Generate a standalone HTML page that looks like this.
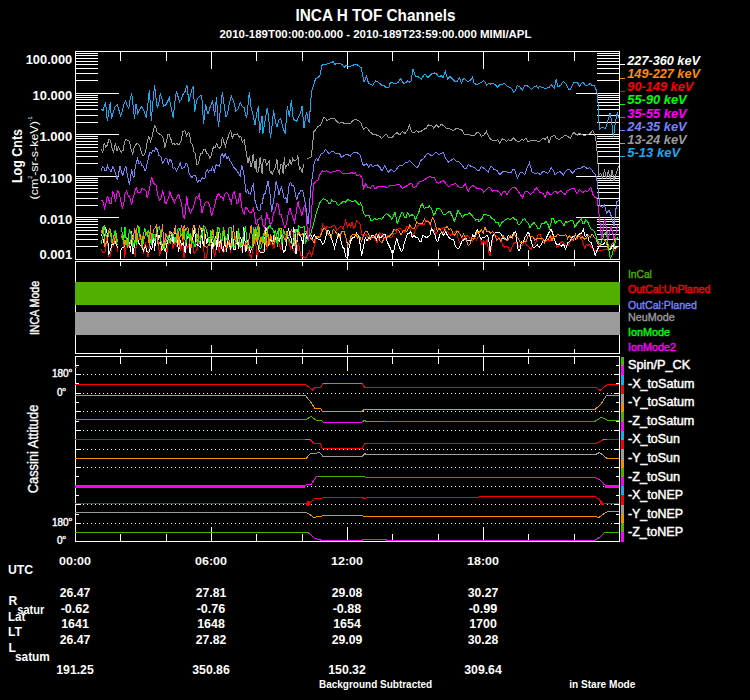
<!DOCTYPE html><html><head><meta charset="utf-8"><style>html,body{margin:0;padding:0;background:#000}svg{display:block}</style></head><body>
<svg width="750" height="700" viewBox="0 0 750 700" font-family="'Liberation Sans', sans-serif" shape-rendering="crispEdges">
<rect width="750" height="700" fill="#000"/>
<text x="375.5" y="21" font-size="16" fill="#fff" font-weight="bold" text-anchor="middle" textLength="160" lengthAdjust="spacingAndGlyphs">INCA H TOF Channels</text>
<text x="375.5" y="37.8" font-size="11.3" fill="#fff" font-weight="bold" text-anchor="middle" textLength="312" lengthAdjust="spacingAndGlyphs">2010-189T00:00:00.000 - 2010-189T23:59:00.000 MIMI/APL</text>
<rect x="75" y="51" width="545" height="1" fill="#fff"/>
<rect x="75" y="259" width="545" height="1" fill="#fff"/>
<rect x="75" y="51" width="1" height="209" fill="#fff"/>
<rect x="619" y="51" width="1" height="209" fill="#fff"/>
<rect x="120" y="52" width="1" height="9" fill="#fff"/>
<rect x="120" y="250" width="1" height="9" fill="#fff"/>
<rect x="166" y="52" width="1" height="9" fill="#fff"/>
<rect x="166" y="250" width="1" height="9" fill="#fff"/>
<rect x="211" y="52" width="1" height="17" fill="#fff"/>
<rect x="211" y="242" width="1" height="17" fill="#fff"/>
<rect x="256" y="52" width="1" height="9" fill="#fff"/>
<rect x="256" y="250" width="1" height="9" fill="#fff"/>
<rect x="302" y="52" width="1" height="9" fill="#fff"/>
<rect x="302" y="250" width="1" height="9" fill="#fff"/>
<rect x="347" y="52" width="1" height="17" fill="#fff"/>
<rect x="347" y="242" width="1" height="17" fill="#fff"/>
<rect x="392" y="52" width="1" height="9" fill="#fff"/>
<rect x="392" y="250" width="1" height="9" fill="#fff"/>
<rect x="438" y="52" width="1" height="9" fill="#fff"/>
<rect x="438" y="250" width="1" height="9" fill="#fff"/>
<rect x="483" y="52" width="1" height="17" fill="#fff"/>
<rect x="483" y="242" width="1" height="17" fill="#fff"/>
<rect x="528" y="52" width="1" height="9" fill="#fff"/>
<rect x="528" y="250" width="1" height="9" fill="#fff"/>
<rect x="574" y="52" width="1" height="9" fill="#fff"/>
<rect x="574" y="250" width="1" height="9" fill="#fff"/>
<rect x="76" y="80" width="22" height="1" fill="#fff"/>
<rect x="597" y="80" width="22" height="1" fill="#fff"/>
<rect x="76" y="73" width="22" height="1" fill="#fff"/>
<rect x="597" y="73" width="22" height="1" fill="#fff"/>
<rect x="76" y="68" width="22" height="1" fill="#fff"/>
<rect x="597" y="68" width="22" height="1" fill="#fff"/>
<rect x="76" y="64" width="22" height="1" fill="#fff"/>
<rect x="597" y="64" width="22" height="1" fill="#fff"/>
<rect x="76" y="61" width="22" height="1" fill="#fff"/>
<rect x="597" y="61" width="22" height="1" fill="#fff"/>
<rect x="76" y="58" width="22" height="1" fill="#fff"/>
<rect x="597" y="58" width="22" height="1" fill="#fff"/>
<rect x="76" y="55" width="22" height="1" fill="#fff"/>
<rect x="597" y="55" width="22" height="1" fill="#fff"/>
<rect x="76" y="53" width="22" height="1" fill="#fff"/>
<rect x="597" y="53" width="22" height="1" fill="#fff"/>
<rect x="76" y="122" width="22" height="1" fill="#fff"/>
<rect x="597" y="122" width="22" height="1" fill="#fff"/>
<rect x="76" y="115" width="22" height="1" fill="#fff"/>
<rect x="597" y="115" width="22" height="1" fill="#fff"/>
<rect x="76" y="109" width="22" height="1" fill="#fff"/>
<rect x="597" y="109" width="22" height="1" fill="#fff"/>
<rect x="76" y="105" width="22" height="1" fill="#fff"/>
<rect x="597" y="105" width="22" height="1" fill="#fff"/>
<rect x="76" y="102" width="22" height="1" fill="#fff"/>
<rect x="597" y="102" width="22" height="1" fill="#fff"/>
<rect x="76" y="99" width="22" height="1" fill="#fff"/>
<rect x="597" y="99" width="22" height="1" fill="#fff"/>
<rect x="76" y="97" width="22" height="1" fill="#fff"/>
<rect x="597" y="97" width="22" height="1" fill="#fff"/>
<rect x="76" y="95" width="22" height="1" fill="#fff"/>
<rect x="597" y="95" width="22" height="1" fill="#fff"/>
<rect x="76" y="163" width="22" height="1" fill="#fff"/>
<rect x="597" y="163" width="22" height="1" fill="#fff"/>
<rect x="76" y="156" width="22" height="1" fill="#fff"/>
<rect x="597" y="156" width="22" height="1" fill="#fff"/>
<rect x="76" y="151" width="22" height="1" fill="#fff"/>
<rect x="597" y="151" width="22" height="1" fill="#fff"/>
<rect x="76" y="147" width="22" height="1" fill="#fff"/>
<rect x="597" y="147" width="22" height="1" fill="#fff"/>
<rect x="76" y="144" width="22" height="1" fill="#fff"/>
<rect x="597" y="144" width="22" height="1" fill="#fff"/>
<rect x="76" y="141" width="22" height="1" fill="#fff"/>
<rect x="597" y="141" width="22" height="1" fill="#fff"/>
<rect x="76" y="138" width="22" height="1" fill="#fff"/>
<rect x="597" y="138" width="22" height="1" fill="#fff"/>
<rect x="76" y="136" width="22" height="1" fill="#fff"/>
<rect x="597" y="136" width="22" height="1" fill="#fff"/>
<rect x="76" y="205" width="22" height="1" fill="#fff"/>
<rect x="597" y="205" width="22" height="1" fill="#fff"/>
<rect x="76" y="198" width="22" height="1" fill="#fff"/>
<rect x="597" y="198" width="22" height="1" fill="#fff"/>
<rect x="76" y="192" width="22" height="1" fill="#fff"/>
<rect x="597" y="192" width="22" height="1" fill="#fff"/>
<rect x="76" y="188" width="22" height="1" fill="#fff"/>
<rect x="597" y="188" width="22" height="1" fill="#fff"/>
<rect x="76" y="185" width="22" height="1" fill="#fff"/>
<rect x="597" y="185" width="22" height="1" fill="#fff"/>
<rect x="76" y="182" width="22" height="1" fill="#fff"/>
<rect x="597" y="182" width="22" height="1" fill="#fff"/>
<rect x="76" y="180" width="22" height="1" fill="#fff"/>
<rect x="597" y="180" width="22" height="1" fill="#fff"/>
<rect x="76" y="178" width="22" height="1" fill="#fff"/>
<rect x="597" y="178" width="22" height="1" fill="#fff"/>
<rect x="76" y="246" width="22" height="1" fill="#fff"/>
<rect x="597" y="246" width="22" height="1" fill="#fff"/>
<rect x="76" y="239" width="22" height="1" fill="#fff"/>
<rect x="597" y="239" width="22" height="1" fill="#fff"/>
<rect x="76" y="234" width="22" height="1" fill="#fff"/>
<rect x="597" y="234" width="22" height="1" fill="#fff"/>
<rect x="76" y="230" width="22" height="1" fill="#fff"/>
<rect x="597" y="230" width="22" height="1" fill="#fff"/>
<rect x="76" y="227" width="22" height="1" fill="#fff"/>
<rect x="597" y="227" width="22" height="1" fill="#fff"/>
<rect x="76" y="224" width="22" height="1" fill="#fff"/>
<rect x="597" y="224" width="22" height="1" fill="#fff"/>
<rect x="76" y="221" width="22" height="1" fill="#fff"/>
<rect x="597" y="221" width="22" height="1" fill="#fff"/>
<rect x="76" y="219" width="22" height="1" fill="#fff"/>
<rect x="597" y="219" width="22" height="1" fill="#fff"/>
<rect x="76" y="51" width="43" height="1" fill="#fff"/>
<rect x="576" y="51" width="43" height="1" fill="#fff"/>
<rect x="76" y="93" width="43" height="1" fill="#fff"/>
<rect x="576" y="93" width="43" height="1" fill="#fff"/>
<rect x="76" y="134" width="43" height="1" fill="#fff"/>
<rect x="576" y="134" width="43" height="1" fill="#fff"/>
<rect x="76" y="176" width="43" height="1" fill="#fff"/>
<rect x="576" y="176" width="43" height="1" fill="#fff"/>
<rect x="76" y="217" width="43" height="1" fill="#fff"/>
<rect x="576" y="217" width="43" height="1" fill="#fff"/>
<rect x="76" y="259" width="43" height="1" fill="#fff"/>
<rect x="576" y="259" width="43" height="1" fill="#fff"/>
<text x="72.2" y="63.5" font-size="12.5" fill="#fff" font-weight="bold" text-anchor="end" textLength="46.5" lengthAdjust="spacingAndGlyphs">100.000</text>
<text x="72.2" y="99.7" font-size="12.5" fill="#fff" font-weight="bold" text-anchor="end" textLength="39.6" lengthAdjust="spacingAndGlyphs">10.000</text>
<text x="72.2" y="141.20000000000002" font-size="12.5" fill="#fff" font-weight="bold" text-anchor="end" textLength="32.8" lengthAdjust="spacingAndGlyphs">1.000</text>
<text x="72.2" y="182.70000000000002" font-size="12.5" fill="#fff" font-weight="bold" text-anchor="end" textLength="32.8" lengthAdjust="spacingAndGlyphs">0.100</text>
<text x="72.2" y="224.20000000000002" font-size="12.5" fill="#fff" font-weight="bold" text-anchor="end" textLength="32.8" lengthAdjust="spacingAndGlyphs">0.010</text>
<text x="72.2" y="259.3" font-size="12.5" fill="#fff" font-weight="bold" text-anchor="end" textLength="32.8" lengthAdjust="spacingAndGlyphs">0.001</text>
<text x="21.6" y="156" font-size="14.5" fill="#fff" font-weight="bold" text-anchor="middle" textLength="54" lengthAdjust="spacingAndGlyphs" transform="rotate(-90 21.6 156)">Log Cnts</text>
<text x="37.8" y="158" font-size="11.8" fill="#fff" text-anchor="middle" textLength="83" lengthAdjust="spacingAndGlyphs" transform="rotate(-90 37.8 158)">(cm<tspan font-size='5' dy='-6'>2</tspan><tspan dy='6'>-sr-s-keV)</tspan><tspan font-size='5' dy='-6'>-1</tspan></text>
<rect x="620" y="64" width="5" height="1" fill="#ffffff"/>
<text x="627.3" y="65.0" font-size="12" fill="#ffffff" font-weight="bold" font-style="italic" textLength="72.6" lengthAdjust="spacingAndGlyphs">227-360 keV</text>
<rect x="620" y="78" width="5" height="1" fill="#ff8c00"/>
<text x="627.3" y="78.13" font-size="12" fill="#ff8c00" font-weight="bold" font-style="italic" textLength="72.6" lengthAdjust="spacingAndGlyphs">149-227 keV</text>
<rect x="620" y="91" width="5" height="1" fill="#ff0000"/>
<text x="627.3" y="91.26" font-size="12" fill="#ff0000" font-weight="bold" font-style="italic" textLength="66.0" lengthAdjust="spacingAndGlyphs">90-149 keV</text>
<rect x="620" y="104" width="5" height="1" fill="#00ff00"/>
<text x="627.3" y="104.39" font-size="12" fill="#00ff00" font-weight="bold" font-style="italic" textLength="59.4" lengthAdjust="spacingAndGlyphs">55-90 keV</text>
<rect x="620" y="117" width="5" height="1" fill="#ff00ff"/>
<text x="627.3" y="117.52000000000001" font-size="12" fill="#ff00ff" font-weight="bold" font-style="italic" textLength="59.4" lengthAdjust="spacingAndGlyphs">35-55 keV</text>
<rect x="620" y="130" width="5" height="1" fill="#7882ff"/>
<text x="627.3" y="130.65" font-size="12" fill="#7882ff" font-weight="bold" font-style="italic" textLength="59.4" lengthAdjust="spacingAndGlyphs">24-35 keV</text>
<rect x="620" y="143" width="5" height="1" fill="#9c9c9c"/>
<text x="627.3" y="143.78" font-size="12" fill="#9c9c9c" font-weight="bold" font-style="italic" textLength="59.4" lengthAdjust="spacingAndGlyphs">13-24 keV</text>
<rect x="620" y="156" width="5" height="1" fill="#14aaf5"/>
<text x="627.3" y="156.91" font-size="12" fill="#14aaf5" font-weight="bold" font-style="italic" textLength="52.8" lengthAdjust="spacingAndGlyphs">5-13 keV</text>
<polyline points="101.0,248.9 102.9,253.1 105.1,251.8 107.2,234.7 108.8,256.6 110.6,255.6 111.7,245.3 112.9,247.1 114.6,234.3 115.9,240.7 118.0,252.4" fill="none" stroke="#ff0000" stroke-width="1"/>
<polyline points="121.4,234.0 123.5,239.0 124.7,257.6 126.8,240.9 129.0,246.9 130.8,238.9 133.0,250.6 135.2,255.4 136.5,242.7 137.7,237.5 138.8,241.2 140.5,234.1 142.3,242.1 143.7,253.6 145.3,241.6 146.8,250.9 147.9,257.4 148.8,252.0 150.9,234.4 152.9,242.8 154.6,234.2 155.6,238.3 157.8,238.7 159.7,256.3 161.9,242.3 163.3,246.6 165.2,236.6 167.1,253.1 169.2,234.9 171.4,236.2 172.8,248.7 174.9,242.2 177.0,247.1 178.4,241.6 179.6,235.9 180.7,250.5 183.0,237.9 184.0,257.7 185.6,243.7 186.9,248.3 188.9,244.9 190.4,235.3 192.6,234.8 194.1,254.1 195.3,251.6 197.5,249.1 199.4,236.6 200.9,237.6 203.0,241.1 204.5,258.0 206.6,257.4 208.1,245.7 210.0,245.5 211.3,243.7 212.5,243.0 214.7,257.0 216.5,246.0 217.9,236.1 219.2,252.8 221.2,242.7 223.2,252.6 225.1,249.9 227.0,242.7 228.9,240.7 230.4,252.5 232.3,241.1 234.4,249.6 236.2,234.3 237.8,240.0 239.6,245.1 241.6,249.5 243.6,242.3 245.4,251.7 247.4,242.4 249.5,254.9 251.3,257.4 253.5,246.4 255.1,238.0 257.2,256.5 258.7,250.6 260.6,251.5 261.8,252.7 263.5,250.0 265.0,249.0 266.9,249.3 268.8,234.7 270.0,244.6 271.8,239.3 273.6,249.1 274.6,245.3 275.9,235.3 277.0,241.6 278.2,238.6 279.2,245.2 280.7,248.7 282.4,239.7 284.5,234.0 286.0,240.7 287.5,236.8 289.5,243.0 290.5,248.7 291.6,247.1 293.0,247.9 295.1,253.6 296.6,253.5 298.4,242.9 299.6,248.3 301.2,257.0 301.5,255.3 303.7,257.2 305.9,258.2 307.7,254.1 309.5,250.9 311.7,256.0 313.2,250.7 314.7,244.3 316.1,238.9 317.6,237.7 319.8,236.9 321.2,232.9 322.7,224.5 324.9,227.4 326.0,228.9 327.1,225.9 329.0,227.7 330.8,227.4 333.0,225.9 334.9,225.7 336.7,230.3 338.5,228.6 340.3,226.7 341.8,226.6 343.3,228.9 345.5,220.8 347.7,226.7 349.2,223.5 350.6,226.9 352.1,222.3 353.6,228.0 355.0,226.7 356.5,220.8 358.7,223.0 360.2,224.0 361.6,233.9 363.1,235.5 364.6,235.5 366.0,234.0 367.4,236.5 368.9,240.6 370.4,237.4 371.8,238.4 373.3,235.5 375.1,238.8 377.0,242.8 378.4,239.0 379.9,232.5 381.4,235.6 382.8,233.9 384.3,238.4 386.1,238.4 388.0,234.7 390.0,237.6 391.9,237.1 393.9,233.3 395.7,233.7 397.4,229.2 399.2,228.5 400.9,229.0 402.7,231.1 404.6,232.7 406.6,226.8 408.5,226.7 410.1,229.4 411.6,234.0 413.5,234.9 415.3,230.3 417.5,226.1 419.7,224.5 421.2,224.8 422.6,224.1 424.1,224.5 426.3,220.0 428.5,221.5 429.9,224.7 431.4,226.7 432.9,231.8 434.3,229.6 435.8,234.7 438.0,229.9 440.2,228.9 442.2,229.0 444.1,227.1 446.1,231.1 448.0,232.0 450.0,235.3 451.9,234.0 453.4,234.1 454.8,232.3 456.3,231.1 458.5,240.2 460.7,244.3 462.7,238.9 464.6,238.9 466.6,235.5 468.6,236.6 470.5,240.1 472.5,241.3 474.4,236.9 476.4,239.8 478.3,236.2 480.1,237.8 482.0,245.0 483.7,241.0 485.4,243.8 487.1,239.9 488.6,251.1 490.1,256.0 491.6,245.6 493.0,236.2 495.2,235.9 497.4,236.9 499.2,237.7 501.0,240.5 502.9,245.4 504.7,247.2 506.5,246.4 508.2,247.5 510.0,251.6 512.2,246.9 514.4,242.8 516.6,242.7 518.8,247.2 520.8,246.0 522.7,245.0 524.7,240.6 526.6,245.5 528.6,246.3 530.5,249.4 532.7,245.8 534.9,244.3 536.6,240.4 538.4,234.0 540.1,234.0 541.9,239.9 543.7,242.8 545.7,241.1 547.6,240.5 549.6,241.3 551.8,236.6 554.0,237.7 555.5,242.1 556.9,247.2 558.9,245.8 560.8,242.5 562.8,241.3 564.8,245.1 566.7,245.0 568.7,245.0 570.6,240.8 572.6,240.3 574.5,237.7 576.5,239.3 578.4,235.4 580.4,234.0 582.6,242.1 584.8,248.7 586.3,244.2 587.7,245.7 589.2,244.3 591.4,246.9 593.6,250.1 595.8,250.2 598.0,251.6 600.0,250.3 601.9,250.7 603.9,249.4 605.7,249.5 607.5,249.0 609.4,246.5 611.2,248.7 613.0,247.9 614.9,251.2 616.7,247.0 618.5,247.2" fill="none" stroke="#ff0000" stroke-width="1"/>
<polyline points="101.0,233.7 102.7,237.4 104.4,244.5 105.4,227.4 107.5,234.3 108.7,254.9 110.3,250.4 111.9,244.9 113.0,244.8 115.1,241.6 117.0,245.8 118.0,248.2" fill="none" stroke="#ffffff" stroke-width="1"/>
<polyline points="120.7,251.2 122.3,247.1 124.4,247.0 126.5,238.1 128.5,239.4 130.7,251.6 131.8,230.8 133.0,254.0 134.5,244.5 135.9,241.2 137.3,236.8 139.0,243.4 141.1,246.1 143.3,251.0 145.5,245.8 146.7,251.1 148.9,252.3 150.6,247.0 151.8,250.3 153.5,235.0 154.5,250.9 156.8,229.5 158.8,238.5 159.9,235.2 161.8,251.4 162.9,244.2 163.9,247.1 165.3,251.7 167.5,241.2 169.7,235.7 170.8,243.8 171.8,232.5 173.3,244.1 174.4,228.2 176.5,235.8 178.7,252.1 180.1,239.9 181.7,245.0 183.5,242.7 185.2,253.3 186.8,239.1 188.7,233.7 190.1,254.4 191.7,242.4 192.7,238.6 194.4,227.6 196.1,244.7 197.2,244.6 198.7,246.0 200.1,246.8 202.0,227.6 203.1,245.9 205.3,234.0 206.8,243.6 208.2,237.2 209.5,237.3 211.3,235.4 212.7,248.6 213.7,242.9 215.6,235.7 216.8,249.5 218.1,232.2 219.6,246.5 220.7,236.0 222.1,250.3 223.6,251.0 224.8,236.4 226.6,251.8 228.1,233.3 229.2,241.8 230.4,249.6 232.5,232.1 233.8,249.6 235.6,249.6 237.0,230.6 238.3,249.2 239.6,236.7 241.1,238.8 242.6,252.8 243.8,227.1 245.9,251.6 248.1,239.2 250.3,253.0 251.6,247.9 253.6,245.6 255.2,235.1 256.6,233.4 257.7,243.5 259.0,249.7 260.0,252.3 261.9,252.9 264.0,252.2 265.7,227.4 267.6,231.8 268.9,245.6 270.6,238.6 272.7,244.1 274.1,234.1 276.2,240.4 278.1,236.9 279.3,242.0 281.4,231.8 283.3,252.8 285.3,250.1 286.3,244.6 288.4,228.4 289.7,234.5 291.3,238.8 292.9,248.7 293.8,228.5 294.9,230.5 296.0,254.3 298.0,229.4 299.6,235.8 301.0,236.8 302.8,243.4 302.2,256.0 303.7,234.7 305.4,233.3 307.1,238.9 308.8,236.2 310.6,234.0 312.5,238.4 314.3,234.4 316.1,237.7 318.3,239.1 320.5,239.9 322.7,244.3 324.5,242.6 326.4,234.0 327.9,230.5 329.3,231.1 331.0,237.7 332.8,242.0 334.5,247.9 336.7,240.3 338.9,233.3 340.7,240.2 342.5,247.2 344.2,248.9 346.0,257.3 347.7,258.5 349.1,247.2 350.6,241.3 352.5,237.6 354.3,237.7 356.5,233.2 358.7,235.5 360.1,244.1 361.6,256.0 363.5,246.2 365.3,237.7 367.0,241.0 368.7,237.8 370.4,239.1 371.9,235.4 373.3,235.5 374.8,236.2 376.5,240.1 378.2,234.1 379.9,237.7 381.6,237.3 383.4,234.4 385.1,234.0 386.6,239.9 388.0,243.5 390.2,247.9 392.4,254.5 393.9,250.5 395.3,243.7 396.8,238.4 399.0,246.0 401.2,251.6 402.7,250.2 404.1,243.8 405.6,239.1 407.5,233.7 409.4,233.3 410.9,231.0 412.3,237.9 413.8,235.5 415.8,237.4 417.7,237.2 419.7,241.3 421.1,241.5 422.6,235.5 424.6,236.3 426.5,237.6 428.5,236.2 429.9,235.2 431.4,228.9 433.0,230.5 434.7,234.1 436.4,240.8 438.0,241.3 439.9,234.3 441.7,232.5 443.6,235.4 445.6,231.7 447.5,235.5 449.5,238.0 451.4,239.3 453.4,239.1 455.1,245.4 456.8,247.9 458.5,248.7 460.2,245.8 462.0,240.7 463.7,239.9 465.5,237.6 467.4,240.5 469.2,240.5 471.0,240.6 472.6,234.8 474.3,237.9 476.0,232.4 477.6,229.6 479.5,235.8 481.3,239.1 483.1,237.0 485.0,237.0 486.8,235.2 488.6,238.4 490.1,251.6 491.6,242.5 493.0,235.5 495.0,232.9 496.9,233.0 498.9,232.5 500.8,233.4 502.8,238.3 504.7,237.7 506.4,240.4 508.1,235.4 509.8,237.0 511.5,237.7 513.7,232.4 515.9,231.8 517.0,242.1 518.1,250.1 519.8,250.3 521.4,241.8 523.1,242.7 524.7,237.7 526.4,235.3 528.1,232.3 529.8,234.7 531.6,243.2 533.5,247.9 535.4,246.6 537.4,245.1 539.3,247.2 541.3,244.5 543.2,240.9 545.2,240.6 547.2,236.1 549.1,232.4 551.1,228.9 553.3,235.3 555.5,242.8 557.4,244.7 559.4,243.8 561.3,246.5 562.8,244.6 564.2,245.5 565.7,249.4 567.7,242.7 569.6,241.7 571.6,237.7 573.6,236.2 575.5,238.9 577.5,236.2 579.4,234.0 581.4,233.3 583.3,229.6 585.3,236.9 587.2,234.3 589.2,241.3 591.2,242.6 593.1,248.1 595.1,255.3 597.3,249.7 599.5,245.7 601.4,244.7 603.4,244.5 605.3,241.3 607.3,242.7 609.2,249.5 611.2,248.7 613.2,244.2 615.1,249.0 617.1,245.7" fill="none" stroke="#ffffff" stroke-width="1"/>
<polyline points="101.0,229.7 102.1,233.5 103.3,225.6 104.7,246.0 106.7,242.4 108.0,236.9 109.3,228.1 110.4,229.1 112.5,243.9 114.5,243.2 115.7,231.4 117.5,241.6" fill="none" stroke="#ff8c00" stroke-width="1"/>
<polyline points="120.6,238.5 122.4,236.1 123.6,235.4 124.7,246.4 126.7,237.1 128.1,245.8 129.8,245.2 131.8,236.2 133.3,238.4 134.8,227.9 136.2,243.5 137.2,225.1 139.0,230.7 140.6,235.3 142.0,247.9 143.2,233.9 144.4,239.2 145.7,232.5 147.7,231.7 149.3,245.7 150.4,225.5 151.7,242.4 153.4,229.7 154.8,228.3 156.4,225.0 158.2,245.5 160.4,241.6 162.6,224.4 163.9,247.2 165.9,233.9 168.0,238.9 170.0,231.0 171.2,234.7 172.4,233.2 174.6,232.0 175.5,225.1 176.7,242.8 178.1,231.0 179.2,247.6 180.7,229.0 181.8,225.3 182.9,240.2 184.1,225.0 185.7,230.0 187.9,226.9 189.6,242.6 191.0,247.7 192.6,229.8 194.1,224.9 195.6,230.0 197.7,243.9 199.3,224.8 200.6,229.8 201.8,229.6 203.9,227.4 204.9,246.3 206.6,247.8 208.1,245.6 209.9,243.0 211.8,235.9 212.9,229.1 214.9,245.6 217.1,232.1 218.9,243.2 220.7,243.6 222.3,239.7 224.1,230.4 226.3,247.0 227.3,247.3 229.5,240.0 230.5,245.6 231.7,247.2 233.5,225.5 234.6,239.2 236.3,241.9 238.5,229.2 239.4,246.1 240.4,245.0 241.5,243.4 243.5,245.1 245.2,245.1 246.4,240.1 247.8,245.4 249.7,235.3 251.3,224.6 252.3,238.3 253.9,244.8 255.7,227.3 257.1,242.4 258.7,224.3 260.8,243.9 261.8,237.0 263.3,242.9 264.6,229.6 266.2,247.2 267.3,226.7 269.1,245.2 270.7,234.4 272.7,242.6 273.8,245.2 275.0,231.3 277.0,234.1 279.0,228.0 281.1,228.2 282.2,235.9 283.6,237.0 285.7,241.1 286.7,231.5 288.4,235.7 290.2,235.6 291.3,229.9 293.3,232.6 295.3,247.7 297.0,240.2 298.8,231.5 300.9,235.2 303.7,233.3 305.9,231.1 307.3,234.7 309.1,236.3 311.0,238.4 312.4,239.7 313.9,242.8 315.8,237.0 317.6,236.2 319.5,237.7 321.3,234.0 323.5,228.3 325.7,229.6 327.5,232.6 329.3,235.5 331.3,236.8 333.2,229.6 335.2,231.1 336.7,233.7 338.1,236.3 339.6,237.7 341.8,231.2 344.0,231.1 345.9,237.6 347.7,245.7 349.5,242.0 351.3,235.5 353.5,234.4 355.7,234.0 357.7,238.0 359.6,236.5 361.6,241.3 363.3,236.1 365.0,231.8 366.7,231.1 368.4,233.3 370.2,238.5 371.9,237.7 373.4,237.1 374.8,237.2 376.3,234.0 378.2,236.1 380.2,241.6 382.1,242.8 384.1,238.0 386.0,237.4 388.0,236.9 390.0,235.7 391.9,233.6 393.9,229.6 395.7,230.3 397.5,229.3 399.4,231.8 401.2,234.7 403.0,231.0 404.9,229.9 406.7,231.9 408.5,228.1 409.7,225.3 410.9,226.7 412.8,228.8 414.8,228.1 416.8,221.7 418.7,223.4 420.7,223.6 422.6,223.0 424.6,219.2 426.5,221.5 428.5,221.5 430.4,223.9 432.4,217.9 434.3,220.1 435.8,226.3 437.3,231.1 439.2,228.2 441.2,231.2 443.1,233.1 445.1,228.0 447.1,226.4 449.0,229.6 451.0,228.7 452.9,233.8 454.9,235.5 456.7,231.8 458.4,232.0 460.2,234.6 461.9,237.2 463.7,234.0 465.2,237.3 466.6,241.1 468.1,245.7 469.9,244.3 471.8,238.1 473.6,239.1 475.4,236.2 477.4,231.7 479.3,232.6 481.3,229.6 483.1,233.2 485.0,227.2 486.8,231.1 488.6,231.1 490.7,233.3 492.7,231.6 494.8,233.9 496.8,240.4 498.9,238.4 500.9,241.7 503.0,235.5 505.0,239.4 507.1,241.0 509.1,237.7 510.8,235.5 512.5,237.7 514.2,233.4 515.9,236.2 517.8,237.5 519.8,241.8 521.7,242.8 523.9,242.0 526.1,241.8 528.3,235.5 530.5,236.9 532.7,236.2 534.9,240.2 537.1,238.6 539.3,238.4 541.1,238.4 542.8,238.3 544.6,242.7 546.3,240.1 548.1,239.9 550.1,235.8 552.0,240.5 554.0,236.5 556.0,236.5 557.9,234.2 559.9,235.5 561.9,235.7 563.8,235.5 565.8,234.4 567.7,238.8 569.6,235.7 571.6,239.1 573.4,240.2 575.2,234.0 577.1,238.4 578.9,235.5 580.8,238.4 582.6,236.9 584.4,239.1 586.3,238.4 588.2,235.2 590.2,237.1 592.1,234.0 594.1,236.9 596.0,239.0 598.0,244.3 600.0,245.8 601.9,240.1 603.9,239.1 605.8,241.4 607.8,248.0 609.7,248.7 611.7,244.4 613.6,243.0 615.6,238.4" fill="none" stroke="#ff8c00" stroke-width="1"/>
<polyline points="101.0,244.0 103.0,236.6 104.3,225.0 106.1,236.3 108.0,234.0 110.0,231.5 112.0,242.5 113.5,237.9 115.3,229.6 117.0,244.3 118.3,244.3" fill="none" stroke="#00ff00" stroke-width="1"/>
<polyline points="121.5,227.2 123.5,244.3 125.0,227.3 126.2,240.2 127.6,247.8 129.3,229.8 131.1,233.6 133.2,246.8 134.8,240.5 136.7,244.3 138.9,225.7 140.3,239.4 141.7,239.1 142.8,246.1 144.4,227.8 146.2,232.5 147.4,236.6 148.5,230.0 150.6,241.8 151.6,243.7 152.6,233.0 154.7,239.9 156.0,234.1 157.5,228.0 159.7,226.3 161.2,242.9 162.7,248.5 164.0,248.5 166.1,241.1 168.2,235.7 170.2,244.1 171.8,236.3 173.7,234.8 174.8,242.9 176.1,236.7 178.0,229.1 179.0,228.0 180.7,233.7 182.0,235.8 184.2,231.1 185.6,246.1 187.4,231.4 189.0,236.5 190.1,234.1 191.5,244.3 192.8,240.8 195.0,247.2 196.5,239.5 197.8,234.6 199.4,244.0 201.6,232.0 202.5,235.8 203.6,225.7 205.5,227.7 207.4,233.7 209.6,245.5 210.6,229.6 212.8,239.7 214.3,243.8 216.3,236.8 217.8,227.4 219.3,228.5 221.0,239.6 222.2,240.1 223.3,227.5 225.0,236.1 227.2,240.1 229.0,228.0 231.0,227.0 232.8,246.9 234.9,246.4 236.5,241.7 238.4,228.3 240.6,246.8 242.1,243.7 243.7,231.6 245.5,226.5 247.5,248.5 248.8,247.6 249.9,245.6 251.2,248.2 252.7,247.1 253.7,227.1 255.7,240.3 257.4,225.8 258.6,233.9 259.6,248.8 261.5,247.8 263.4,233.2 264.4,242.6 265.6,238.1 267.1,236.9 268.2,226.8 269.8,225.7 271.4,228.6 272.7,228.6 274.4,234.3 275.7,230.3 277.4,246.9 278.9,228.9 280.2,230.8 281.9,243.9 283.6,229.5 285.0,234.1 286.5,234.5 288.7,238.2 290.5,242.2 292.3,244.3 293.8,241.0 296.0,228.9 297.7,234.2 298.8,226.0 300.7,227.8 302.6,227.4 304.0,225.8 305.7,243.9 306.4,240.6 308.2,238.2 310.0,236.0 312.0,229.5 314.0,222.2 316.0,214.0 318.1,207.3 320.3,201.8 322.4,199.4 323.9,198.8 325.3,199.4 327.1,200.5 329.0,203.8 330.4,203.4 331.9,199.8 333.8,201.7 335.6,201.6 337.1,204.0 338.5,205.3 340.7,203.7 342.9,201.6 345.4,202.2 347.8,199.4 350.3,200.9 352.7,201.3 355.2,200.7 357.6,203.1 359.1,205.1 360.5,203.1 362.0,206.0 363.5,213.3 365.7,216.0 367.9,215.5 369.4,216.0 370.8,220.7 372.2,220.9 373.7,219.2 375.2,218.7 376.7,219.9 379.1,218.2 381.6,219.2 384.0,216.3 386.0,213.9 387.9,214.1 389.9,216.3 391.4,219.1 392.8,217.7 395.0,211.9 397.2,223.6 399.4,218.1 401.6,212.6 403.1,213.1 404.5,217.7 406.0,217.6 407.5,212.6 409.7,215.9 411.9,214.8 413.7,215.4 415.5,219.9 417.4,215.1 419.2,211.1 420.8,205.6 422.4,203.8 424.3,208.9 426.0,207.0 427.7,207.6 429.4,206.0 431.6,209.1 433.8,215.5 435.2,213.2 436.7,208.9 438.9,208.1 441.1,210.2 443.3,214.9 445.5,214.8 447.7,212.5 449.9,211.1 452.1,215.8 454.3,221.4 456.1,216.4 458.0,210.4 460.2,213.9 462.4,217.7 464.6,214.8 467.0,214.5 469.5,212.9 471.9,215.5 473.9,217.9 475.8,220.3 477.8,219.2 479.2,221.9 480.7,219.9 482.2,218.2 483.7,214.8 485.9,214.4 488.1,215.5 490.0,216.0 492.0,218.9 493.9,219.2 495.9,222.5 497.8,222.1 499.8,226.5 502.0,222.3 504.2,220.7 506.4,219.1 508.6,218.9 510.8,219.5 513.0,217.0 514.7,219.4 516.4,219.5 518.1,224.3 520.3,224.0 522.5,220.1 524.7,218.5 526.5,221.6 528.2,223.0 530.0,227.4 532.0,224.5 533.9,222.3 535.8,224.9 537.7,228.7 539.8,228.3 541.9,223.2 544.0,223.6 546.1,221.6 547.7,223.5 549.3,228.7 550.6,224.5 551.9,218.4 553.5,218.6 555.1,223.5 557.0,221.3 558.9,220.6 560.8,220.3 562.5,223.6 564.1,225.5 565.7,221.7 567.3,222.3 569.2,221.7 571.2,220.0 573.1,221.0 575.0,227.4 577.1,223.3 579.3,221.3 581.4,218.4 582.7,223.2 584.0,223.5 585.9,219.7 588.3,223.0 590.8,228.8 593.2,230.0 595.1,233.0 597.0,239.4 598.9,243.4 600.8,243.2 602.7,238.8 604.5,234.1 606.4,231.9 608.3,246.3 610.2,258.3 612.1,254.7 614.0,247.0 615.9,239.8 617.7,237.5" fill="none" stroke="#00ff00" stroke-width="1"/>
<polyline points="101.7,200.1 103.2,202.2 104.6,208.2 106.0,203.4 107.5,195.7 108.7,199.6 110.0,203.4 111.2,203.1 112.7,192.1 114.2,194.3 115.6,201.6 116.7,193.9 117.8,190.6 119.3,193.6 120.7,200.1 122.2,208.2 123.7,204.2 125.1,193.5 126.6,190.6 128.3,195.5 130.0,197.6 131.7,204.5 133.2,197.3 134.6,192.8 136.1,187.7 137.6,192.1 139.0,192.0 140.5,192.8 142.0,187.9 143.4,189.1 144.9,189.9 146.0,190.7 147.1,197.2 148.6,193.3 150.0,186.0 151.5,176.7 153.0,181.6 154.4,184.2 155.9,184.0 157.1,191.3 158.4,198.3 159.6,200.1 161.1,198.1 162.5,191.3 163.7,193.5 165.0,202.4 166.2,203.8 167.4,199.8 168.7,198.0 169.9,192.1 171.4,196.3 172.8,198.9 174.3,203.1 175.8,199.1 177.2,196.7 178.7,194.3 180.1,199.0 181.6,203.7 183.1,215.5 184.5,219.2 185.6,209.8 186.7,195.7 187.9,205.5 189.2,209.0 190.4,213.3 191.9,209.8 193.3,207.5 194.8,201.6 196.3,196.2 197.7,198.1 199.2,194.3 200.6,203.3 202.1,213.3 203.6,206.8 205.0,203.1 206.5,201.6 207.6,202.5 208.7,203.1 210.1,207.7 211.6,216.3 213.1,210.7 214.6,206.5 216.0,199.5 217.5,195.0 218.9,193.3 220.4,197.5 221.9,196.7 223.3,200.1 224.8,194.3 226.3,192.8 228.0,193.8 229.7,198.6 231.4,203.1 232.9,194.2 234.3,192.1 235.5,197.0 236.8,203.1 238.0,203.1 239.1,197.1 240.2,192.8 241.3,203.4 242.4,210.4 244.1,214.2 245.7,207.5 247.3,208.7 249.0,211.9 250.5,212.9 251.9,211.7 253.4,207.5 254.9,217.4 256.3,225.1 258.0,219.4 259.8,218.5 261.5,216.3 262.9,225.1 264.4,228.0 265.5,223.0 266.6,211.9 267.8,218.7 269.1,218.3 270.3,225.1 271.9,222.4 273.6,213.1 275.2,210.3 276.9,203.1 278.4,204.1 279.8,214.7 281.3,214.8 283.1,222.2 284.9,228.0 286.6,223.2 288.4,212.5 290.1,208.2 291.6,213.8 293.0,218.1 294.5,222.1 295.7,216.0 296.9,207.3 298.1,201.6 299.3,208.3 300.6,210.1 301.8,216.3 303.0,210.7 304.3,205.7 305.5,204.5 306.9,224.2 308.4,241.0 309.5,229.9 310.6,225.0 313.5,184.0 315.0,182.5 316.5,180.4 318.0,180.3 320.2,174.0 322.4,170.8 324.6,171.3 326.8,170.8 329.7,172.3 332.4,171.9 335.1,171.3 337.8,170.5 339.6,170.1 341.5,173.0 343.9,173.1 346.4,173.1 348.8,174.0 351.4,172.4 353.9,173.7 355.4,173.0 356.9,175.9 359.8,174.5 362.0,178.1 363.5,189.1 365.7,184.0 367.9,187.7 370.4,188.0 373.0,184.7 375.2,189.1 378.1,186.3 381.1,186.2 384.0,186.2 386.9,187.7 389.1,185.8 391.3,185.5 394.2,185.5 397.2,184.7 399.8,185.0 402.3,188.4 404.9,186.8 407.5,185.5 409.7,183.9 411.9,183.3 413.3,187.7 416.2,186.7 419.2,181.5 422.1,181.1 425.0,179.6 427.2,177.6 429.4,176.7 431.9,177.2 434.5,177.8 436.7,182.2 438.9,183.3 440.8,181.9 442.6,180.3 444.8,182.4 447.0,185.3 449.2,186.9 451.4,184.7 453.6,184.0 455.8,183.5 458.0,186.5 460.2,187.7 462.8,187.2 465.3,183.7 466.8,188.4 468.3,191.3 470.5,187.5 472.7,185.5 475.1,187.1 477.6,188.7 480.0,188.4 481.9,189.4 483.7,192.1 486.2,190.0 488.8,187.2 490.6,188.7 492.5,191.3 494.7,190.0 496.9,190.6 499.1,192.0 501.3,195.0 503.1,192.1 504.9,191.3 507.1,195.0 509.3,190.6 511.1,188.6 513.0,187.7 515.5,187.8 518.1,191.3 520.3,194.2 522.5,197.9 524.7,192.1 527.7,191.7 530.6,194.3 533.5,191.9 536.4,187.6 538.3,190.5 540.3,192.7 542.8,193.2 545.4,197.2 547.4,191.4 549.9,194.6 552.1,194.0 554.4,191.4 556.0,191.2 557.6,193.3 559.2,192.0 560.8,190.8 563.0,192.9 565.3,194.6 567.3,190.8 569.6,189.5 572.0,188.7 574.3,188.8 576.9,193.3 579.5,189.5 581.1,190.9 582.7,192.7 585.2,190.7 587.8,191.4 590.7,187.3 593.0,194.6 594.9,197.5 596.8,197.8 598.1,206.8 599.4,217.1 601.7,239.4 604.5,218.7 606.4,227.7 608.3,239.4 611.1,226.2 614.0,239.4 615.9,233.5 617.7,225.3" fill="none" stroke="#ff00ff" stroke-width="1"/>
<polyline points="100.9,171.5 102.4,166.6 103.9,167.9 105.0,171.0 106.1,170.8 107.5,165.7 108.6,168.7 109.7,169.3 111.2,171.7 112.7,167.1 114.2,169.4 115.6,173.5 117.1,179.6 118.5,174.5 120.0,165.7 121.5,172.1 122.9,175.9 124.4,169.6 125.9,166.4 127.7,177.0 129.5,184.7 130.6,176.2 131.7,169.3 132.8,175.9 133.9,178.1 135.1,168.4 136.4,162.7 137.6,158.3 139.1,164.0 140.5,162.1 142.0,165.7 143.4,166.3 144.9,170.8 146.1,168.6 147.4,162.6 148.6,156.9 150.1,151.9 151.5,152.9 153.0,150.3 154.5,151.6 155.9,147.6 157.4,150.3 159.1,155.9 160.8,156.1 162.5,163.5 164.0,161.3 165.5,158.4 166.9,158.5 168.4,163.8 169.9,159.1 171.6,161.3 173.2,168.9 174.8,167.4 176.5,170.8 178.3,167.6 180.1,162.7 181.6,168.3 183.1,167.9 184.6,167.2 186.0,163.5 187.5,164.5 188.9,172.5 190.4,175.9 192.1,177.8 193.8,175.1 195.6,175.3 197.3,182.4 199.0,180.3 200.7,181.1 202.1,177.7 203.6,178.7 205.0,178.1 206.1,171.4 207.2,169.3 208.4,172.2 209.7,170.3 210.9,170.8 212.7,166.7 214.4,171.6 216.2,164.9 217.9,165.5 219.7,166.4 221.0,156.4 222.3,153.9 223.8,157.3 225.3,153.7 226.9,158.5 228.4,156.5 229.9,161.1 231.4,162.7 233.2,166.8 234.9,168.3 236.7,170.3 238.4,173.1 240.2,175.9 241.7,164.9 242.8,168.8 243.9,173.7 245.0,184.0 246.1,192.8 247.6,190.1 249.0,193.6 250.5,194.3 251.9,187.0 253.4,184.0 254.9,200.1 256.6,206.5 258.3,210.5 260.0,210.4 261.1,203.3 262.2,203.1 263.7,194.7 265.1,193.7 266.6,187.2 268.1,181.1 269.9,192.7 271.7,211.9 273.2,203.3 274.6,194.9 276.1,181.1 277.6,187.4 279.1,195.0 280.2,189.7 281.3,186.9 282.8,191.5 284.2,198.5 285.7,197.2 287.1,203.1 288.2,192.0 289.3,184.0 290.8,182.0 292.2,186.0 293.7,185.5 295.2,192.6 296.7,200.1 298.2,194.7 299.6,192.4 301.1,189.9 302.9,191.3 304.7,200.1 306.4,210.5 308.0,224.0 309.3,210.1 310.6,188.4 312.5,175.5 314.3,162.0 316.4,158.6 318.0,160.5 319.9,156.1 321.7,153.2 323.5,152.9 325.3,149.5 327.1,151.2 329.0,153.9 331.9,151.0 333.8,151.6 335.6,153.9 337.8,153.2 339.6,153.7 341.5,157.6 344.4,155.1 347.4,154.3 350.3,156.1 352.5,153.2 354.7,152.5 357.6,153.0 360.5,155.4 362.0,161.9 363.5,165.7 366.4,163.5 368.6,167.1 370.8,164.2 373.0,167.1 375.2,165.2 377.4,164.9 379.6,166.9 381.8,170.8 384.7,165.7 386.5,169.4 388.4,172.3 391.3,169.3 393.5,171.6 395.7,170.8 397.9,167.1 400.1,164.9 401.6,165.8 403.1,164.9 405.3,163.0 407.5,162.2 409.7,160.5 412.2,163.4 414.8,165.7 416.6,167.6 418.5,166.4 420.7,160.5 423.1,159.0 425.6,155.7 428.0,153.2 430.9,155.4 433.1,155.2 435.3,152.5 437.1,153.1 438.9,154.7 441.1,153.2 443.3,152.5 445.9,158.9 448.5,162.0 451.1,160.3 453.6,158.3 456.1,161.1 458.7,162.0 461.6,164.6 464.6,168.6 466.5,168.1 468.3,164.6 470.1,165.9 471.9,166.4 474.9,167.7 477.8,170.8 479.6,170.2 481.5,166.4 483.7,168.3 485.9,169.8 488.1,172.3 490.7,166.4 492.3,167.0 493.9,169.3 496.9,170.5 499.8,174.5 502.8,171.9 505.7,171.5 508.6,172.6 511.5,172.3 513.0,169.5 514.5,169.3 517.4,178.1 520.3,172.3 522.5,172.5 524.7,174.5 527.0,168.4 529.4,162.7 532.1,172.3 533.6,173.0 535.1,173.4 537.7,172.8 540.3,174.7 542.9,171.5 545.1,172.0 547.4,173.4 549.3,171.5 551.2,167.6 553.2,170.3 555.1,174.7 557.7,172.6 560.2,171.5 561.8,173.1 563.4,175.3 565.3,171.5 567.5,169.2 569.8,169.6 572.4,173.4 575.0,170.2 577.9,168.3 580.8,168.3 583.0,166.5 585.3,167.2 587.4,168.8 589.6,167.5 591.7,169.6 593.7,172.8 595.6,174.7 597.5,182.4 599.8,205.5 602.6,207.4 604.5,204.5 606.4,213.0 609.2,210.2 611.6,217.2 614.0,226.2 616.8,201.7 618.7,200.8" fill="none" stroke="#7882ff" stroke-width="1"/>
<polyline points="101.2,149.4 102.7,152.7 104.2,143.3 105.7,146.8 107.3,145.1 108.9,139.1 110.5,140.5 112.1,148.1 113.7,152.2 115.3,143.1 117.0,150.5 118.6,146.8 119.9,149.7 121.1,152.6 122.4,150.7 123.4,150.7 124.4,141.7 126.1,139.4 127.8,140.2 129.5,141.7 131.1,149.7 132.7,153.9 134.3,147.1 135.9,144.3 137.4,143.4 138.9,144.4 140.4,148.1 141.7,153.5 143.0,155.8 144.3,154.6 145.9,150.2 147.5,140.4 149.0,136.6 150.5,141.7 152.0,136.6 153.3,131.2 154.6,125.6 155.8,126.7 157.1,132.7 158.8,133.6 160.6,134.6 162.3,136.6 163.6,138.6 164.8,148.1 166.4,141.6 168.0,134.0 169.4,135.0 170.9,139.1 172.4,144.6 173.8,143.0 175.3,144.9 176.8,143.4 178.3,144.9 179.8,143.7 181.3,140.4 182.8,131.4 183.9,131.0 185.0,130.8 186.6,135.8 188.2,132.7 189.5,133.5 190.8,143.0 192.4,144.3 194.0,152.0 195.3,153.3 196.6,164.5 197.9,164.8 199.2,160.8 200.4,153.3 202.0,153.6 203.6,150.0 205.2,149.7 206.9,153.3 208.4,154.1 209.8,158.5 211.3,155.8 212.6,149.4 213.9,146.8 215.2,147.5 216.7,143.6 218.2,147.6 219.7,148.1 221.0,145.7 222.3,137.2 223.9,142.2 225.5,146.2 226.8,141.0 228.0,137.6 229.3,133.3 230.8,130.8 232.3,138.2 233.8,134.6 235.5,134.2 237.3,134.0 239.0,137.2 240.7,136.4 242.4,141.9 244.1,139.8 246.5,154.2 248.0,163.2 249.3,156.1 250.9,167.4 252.2,162.4 253.2,153.8 254.4,164.7 255.2,168.8 256.3,159.0 257.1,173.1 258.6,171.5 260.1,156.9 261.2,165.6 262.1,174.1 263.2,159.8 264.9,159.2 266.6,165.2 268.0,163.2 269.2,160.4 270.1,172.6 271.1,171.0 272.1,174.4 273.8,170.6 275.4,167.5 276.9,159.2 278.2,171.9 279.2,173.6 280.9,164.2 282.0,164.8 283.2,174.3 284.4,156.7 285.3,169.0 287.1,164.7 288.4,165.4 289.9,159.2 291.4,165.0 292.8,158.0 293.7,160.8 295.5,160.5 296.9,159.5 297.8,155.5 299.4,169.1 300.6,167.9 302.1,172.4 303.8,164.4" fill="none" stroke="#9c9c9c" stroke-width="1"/>
<polyline points="307.0,159.0 311.4,156.6 313.8,131.8 316.0,129.2 318.2,126.4 320.0,125.4 321.8,122.6 323.6,117.5 325.1,118.1 327.0,120.5 328.8,119.5 331.8,118.4 334.7,118.8 336.9,121.7 339.4,123.1 342.0,122.5 344.9,123.5 347.9,123.5 350.8,123.2 353.0,120.3 355.9,119.2 358.9,121.0 361.1,123.3 363.3,129.1 365.1,127.9 366.9,127.6 369.9,131.8 372.8,134.2 375.2,134.0 377.7,135.7 380.1,136.4 381.6,138.6 384.1,135.7 386.7,134.2 388.2,137.3 389.7,137.9 392.1,137.8 394.6,134.1 397.0,132.7 399.7,134.8 402.4,131.7 405.1,133.5 407.3,130.6 409.5,125.4 411.7,132.0 414.1,133.2 416.4,130.4 418.8,132.2 421.2,131.3 423.6,129.3 426.1,128.5 428.5,124.7 430.0,125.4 431.9,125.8 433.7,128.3 436.6,124.7 438.8,127.6 441.0,124.2 443.7,125.7 446.4,128.3 449.1,128.3 451.3,129.9 453.5,130.5 456.4,128.3 459.0,129.1 461.5,129.7 464.1,134.3 466.7,134.2 469.6,134.9 472.5,135.7 474.7,135.6 476.9,132.0 479.1,132.9 481.3,136.4 483.9,135.0 486.5,131.3 488.3,136.1 490.1,138.6 493.1,140.9 496.0,140.1 497.9,139.8 499.7,143.0 502.6,138.6 504.5,139.6 506.3,141.5 508.5,139.5 510.7,140.8 513.6,137.9 516.5,140.8 519.0,141.5 521.4,139.8 523.9,140.1 526.1,137.9 527.9,141.4 529.7,141.5 531.2,140.3 532.7,140.1 535.0,140.5 537.6,141.2 540.1,141.2 542.7,138.6 545.3,139.2 547.2,136.6 549.1,143.0 551.1,136.6 552.7,136.2 554.3,135.3 556.8,138.9 559.4,139.2 562.3,137.3 565.2,135.3 567.8,136.4 570.3,138.5 572.2,134.5 574.2,132.1 575.8,134.7 577.4,135.3 579.0,133.5 580.6,134.0 582.9,135.0 585.1,135.3 587.7,134.5 590.3,133.4 592.8,130.2 594.8,135.3 596.7,143.7 597.0,150.8 598.9,175.3 600.8,173.4 602.6,178.0 604.5,169.6 606.4,179.0 608.3,170.6 610.2,180.0 612.1,169.6 614.0,181.0 616.8,171.5 618.7,165.8" fill="none" stroke="#9c9c9c" stroke-width="1"/>
<polyline points="101.2,109.6 103.1,110.2 104.4,106.0 105.7,103.1 107.3,121.1 108.8,111.7 110.2,102.5 111.5,118.6 113.1,112.7 114.7,107.6 116.0,106.1 117.3,105.1 118.9,110.1 120.5,116.0 122.2,111.7 123.9,104.5 125.6,100.6 127.2,105.4 128.8,108.9 130.2,98.8 131.7,93.5 133.1,105.4 134.6,119.2 135.9,103.8 137.8,113.4 139.8,109.1 141.7,106.4 143.9,110.4 146.2,117.9 147.8,105.0 149.4,89.6 151.3,120.5 152.9,101.9 154.6,85.1 156.0,98.1 157.4,108.3 158.9,103.2 160.3,93.5 161.9,98.7 163.6,106.4 165.5,105.4 167.4,101.9 169.3,97.4 171.2,108.5 173.2,117.9 174.8,102.4 176.4,91.6 178.0,96.5 179.6,101.9 181.4,99.1 183.2,94.0 185.0,91.6 186.9,85.1 188.9,101.9 190.8,94.1 192.1,88.6 193.4,85.8 194.6,112.1 195.9,104.7 197.2,99.3 199.4,96.1 201.7,95.4 203.6,124.3 205.6,103.8 206.8,110.4 208.1,114.1 210.3,106.6 212.6,100.6 214.6,116.0 216.5,97.4 218.4,126.9 220.4,109.2 222.3,92.2 224.2,105.5 226.1,117.3 227.8,112.5 229.6,102.1 231.3,96.1 233.6,101.2 235.8,110.8 238.1,109.0 240.3,102.5 242.2,106.7 244.1,107.6 245.4,114.2 246.7,117.9 248.0,104.9 249.3,91.6 251.2,108.3 253.1,115.3 255.0,125.0 256.6,114.0 258.3,106.4 259.6,132.7 260.9,123.4 262.1,116.0 262.8,134.0 265.1,120.6 267.3,107.6 268.9,120.5 270.5,137.8 272.1,125.1 273.6,110.4 275.2,120.0 276.8,127.3 278.8,120.4 280.7,118.4 282.9,127.7 285.2,133.6 287.3,105.9 289.3,116.6 291.4,100.5 293.2,119.3 295.0,120.2 296.8,121.1 298.6,116.6 300.4,113.3 302.1,105.9 303.9,128.2 305.2,120.0 306.6,112.1 308.0,119.0 309.3,122.9 310.7,100.5 312.0,89.8 313.8,84.3 315.5,79.1 318.2,77.3 320.0,75.5 322.2,64.5 324.0,64.9 325.9,64.5 328.8,63.4 331.7,62.3 333.2,61.7 334.7,64.5 337.1,63.2 339.6,63.5 342.0,64.5 344.2,67.5 346.4,65.3 349.3,66.7 351.8,65.6 354.2,64.8 356.7,64.5 358.9,66.1 361.1,67.5 364.0,82.1 366.6,76.3 368.4,82.9 370.6,84.6 372.8,85.1 375.7,80.7 378.6,82.5 381.6,85.1 383.8,85.5 386.0,87.3 388.9,87.3 390.4,82.1 392.6,82.9 394.8,83.6 397.8,82.7 400.7,78.5 402.5,82.1 404.3,83.6 405.8,82.7 407.3,80.7 409.1,82.2 410.9,81.4 413.1,68.9 415.3,76.3 418.2,76.8 421.2,79.2 424.1,74.8 426.0,74.8 427.8,77.7 430.0,75.5 432.2,73.5 434.4,73.0 436.6,73.8 438.8,77.0 441.0,75.6 443.2,77.7 445.4,71.4 447.6,79.2 449.8,76.3 452.2,78.5 454.7,81.2 457.1,81.4 459.3,77.7 461.5,82.9 463.0,79.3 464.5,78.5 466.3,80.6 468.1,81.4 470.3,80.7 472.5,77.3 474.0,82.9 476.2,84.5 478.4,83.9 480.6,82.9 483.5,80.7 485.0,81.7 486.5,85.1 488.7,83.6 490.9,84.1 493.1,83.6 495.3,84.6 497.5,87.3 499.7,84.6 501.9,84.3 504.8,83.6 507.7,86.5 509.5,87.3 511.4,88.0 513.6,92.4 515.5,90.5 517.3,85.5 520.2,87.3 522.4,90.2 524.6,85.8 526.8,85.6 529.0,87.0 531.2,89.5 533.8,87.2 536.3,85.8 538.2,88.2 539.8,86.0 541.4,87.1 543.3,87.8 545.3,88.7 547.9,87.8 549.5,87.0 551.1,84.6 552.7,86.4 554.3,88.4 556.2,79.4 558.1,87.1 560.7,85.2 563.3,81.4 565.8,83.9 568.4,89.1 570.3,89.7 572.3,85.2 574.2,82.2 576.1,82.6 577.7,82.9 579.3,86.5 581.2,83.5 583.2,82.6 585.8,85.8 588.0,85.2 590.3,83.3 592.2,85.8 594.1,85.2 596.1,89.7 597.3,93.6 598.0,102.6 598.6,114.1 599.3,129.6 601.8,127.6 603.8,128.0 605.7,128.3 607.6,121.8 610.2,112.8 611.5,120.6 613.4,137.3 615.3,123.1 617.3,112.2 618.3,118.0" fill="none" stroke="#14aaf5" stroke-width="1"/>
<rect x="75" y="261" width="545" height="1" fill="#fff"/>
<rect x="75" y="353" width="545" height="1" fill="#fff"/>
<rect x="75" y="261" width="1" height="93" fill="#fff"/>
<rect x="619" y="261" width="1" height="93" fill="#fff"/>
<rect x="120" y="262" width="1" height="4" fill="#fff"/>
<rect x="120" y="349" width="1" height="4" fill="#fff"/>
<rect x="166" y="262" width="1" height="4" fill="#fff"/>
<rect x="166" y="349" width="1" height="4" fill="#fff"/>
<rect x="211" y="262" width="1" height="8" fill="#fff"/>
<rect x="211" y="345" width="1" height="8" fill="#fff"/>
<rect x="256" y="262" width="1" height="4" fill="#fff"/>
<rect x="256" y="349" width="1" height="4" fill="#fff"/>
<rect x="302" y="262" width="1" height="4" fill="#fff"/>
<rect x="302" y="349" width="1" height="4" fill="#fff"/>
<rect x="347" y="262" width="1" height="8" fill="#fff"/>
<rect x="347" y="345" width="1" height="8" fill="#fff"/>
<rect x="392" y="262" width="1" height="4" fill="#fff"/>
<rect x="392" y="349" width="1" height="4" fill="#fff"/>
<rect x="438" y="262" width="1" height="4" fill="#fff"/>
<rect x="438" y="349" width="1" height="4" fill="#fff"/>
<rect x="483" y="262" width="1" height="8" fill="#fff"/>
<rect x="483" y="345" width="1" height="8" fill="#fff"/>
<rect x="528" y="262" width="1" height="4" fill="#fff"/>
<rect x="528" y="349" width="1" height="4" fill="#fff"/>
<rect x="574" y="262" width="1" height="4" fill="#fff"/>
<rect x="574" y="349" width="1" height="4" fill="#fff"/>
<rect x="75" y="282" width="545" height="23" fill="#50af00"/>
<rect x="75" y="312" width="545" height="23" fill="#9b9b9b"/>
<text x="38.9" y="308" font-size="13" fill="#fff" text-anchor="middle" textLength="54.2" lengthAdjust="spacingAndGlyphs" transform="rotate(-90 38.9 308)" stroke="#fff" stroke-width="0.4">INCA Mode</text>
<text x="627.9" y="277.9" font-size="11.5" fill="#50af00" textLength="24" lengthAdjust="spacingAndGlyphs" stroke="#50af00" stroke-width="0.4">InCal</text>
<text x="627.9" y="292.9" font-size="11.5" fill="#ff0000" textLength="82.5" lengthAdjust="spacingAndGlyphs" stroke="#ff0000" stroke-width="0.4">OutCal:UnPlaned</text>
<text x="627.9" y="308.6" font-size="11.5" fill="#7882ff" textLength="69" lengthAdjust="spacingAndGlyphs" stroke="#7882ff" stroke-width="0.4">OutCal:Planed</text>
<text x="627.9" y="320.7" font-size="11.5" fill="#9b9b9b" textLength="46.8" lengthAdjust="spacingAndGlyphs" stroke="#9b9b9b" stroke-width="0.4">NeuMode</text>
<text x="627.9" y="335.7" font-size="11.5" fill="#00ff00" textLength="42" lengthAdjust="spacingAndGlyphs" stroke="#00ff00" stroke-width="0.4">IonMode</text>
<text x="627.9" y="351" font-size="11.5" fill="#ff00ff" textLength="48" lengthAdjust="spacingAndGlyphs" stroke="#ff00ff" stroke-width="0.4">IonMode2</text>
<rect x="75" y="356" width="545" height="1" fill="#fff"/>
<rect x="75" y="541" width="545" height="1" fill="#fff"/>
<rect x="75" y="356" width="1" height="186" fill="#fff"/>
<rect x="619" y="356" width="1" height="186" fill="#fff"/>
<rect x="120" y="357" width="1" height="7" fill="#fff"/>
<rect x="120" y="534" width="1" height="7" fill="#fff"/>
<rect x="166" y="357" width="1" height="7" fill="#fff"/>
<rect x="166" y="534" width="1" height="7" fill="#fff"/>
<rect x="211" y="357" width="1" height="14" fill="#fff"/>
<rect x="211" y="527" width="1" height="14" fill="#fff"/>
<rect x="256" y="357" width="1" height="7" fill="#fff"/>
<rect x="256" y="534" width="1" height="7" fill="#fff"/>
<rect x="302" y="357" width="1" height="7" fill="#fff"/>
<rect x="302" y="534" width="1" height="7" fill="#fff"/>
<rect x="347" y="357" width="1" height="14" fill="#fff"/>
<rect x="347" y="527" width="1" height="14" fill="#fff"/>
<rect x="392" y="357" width="1" height="7" fill="#fff"/>
<rect x="392" y="534" width="1" height="7" fill="#fff"/>
<rect x="438" y="357" width="1" height="7" fill="#fff"/>
<rect x="438" y="534" width="1" height="7" fill="#fff"/>
<rect x="483" y="357" width="1" height="14" fill="#fff"/>
<rect x="483" y="527" width="1" height="14" fill="#fff"/>
<rect x="528" y="357" width="1" height="7" fill="#fff"/>
<rect x="528" y="534" width="1" height="7" fill="#fff"/>
<rect x="574" y="357" width="1" height="7" fill="#fff"/>
<rect x="574" y="534" width="1" height="7" fill="#fff"/>
<rect x="76" y="374" width="5" height="1" fill="#fff"/>
<rect x="614" y="374" width="5" height="1" fill="#fff"/>
<rect x="83" y="374" width="1" height="1" fill="#fff"/>
<rect x="87" y="374" width="1" height="1" fill="#fff"/>
<rect x="91" y="374" width="1" height="1" fill="#fff"/>
<rect x="95" y="374" width="1" height="1" fill="#fff"/>
<rect x="99" y="374" width="1" height="1" fill="#fff"/>
<rect x="103" y="374" width="1" height="1" fill="#fff"/>
<rect x="107" y="374" width="1" height="1" fill="#fff"/>
<rect x="111" y="374" width="1" height="1" fill="#fff"/>
<rect x="115" y="374" width="1" height="1" fill="#fff"/>
<rect x="119" y="374" width="1" height="1" fill="#fff"/>
<rect x="123" y="374" width="1" height="1" fill="#fff"/>
<rect x="127" y="374" width="1" height="1" fill="#fff"/>
<rect x="131" y="374" width="1" height="1" fill="#fff"/>
<rect x="135" y="374" width="1" height="1" fill="#fff"/>
<rect x="139" y="374" width="1" height="1" fill="#fff"/>
<rect x="143" y="374" width="1" height="1" fill="#fff"/>
<rect x="147" y="374" width="1" height="1" fill="#fff"/>
<rect x="151" y="374" width="1" height="1" fill="#fff"/>
<rect x="155" y="374" width="1" height="1" fill="#fff"/>
<rect x="159" y="374" width="1" height="1" fill="#fff"/>
<rect x="163" y="374" width="1" height="1" fill="#fff"/>
<rect x="167" y="374" width="1" height="1" fill="#fff"/>
<rect x="171" y="374" width="1" height="1" fill="#fff"/>
<rect x="175" y="374" width="1" height="1" fill="#fff"/>
<rect x="179" y="374" width="1" height="1" fill="#fff"/>
<rect x="183" y="374" width="1" height="1" fill="#fff"/>
<rect x="187" y="374" width="1" height="1" fill="#fff"/>
<rect x="191" y="374" width="1" height="1" fill="#fff"/>
<rect x="195" y="374" width="1" height="1" fill="#fff"/>
<rect x="199" y="374" width="1" height="1" fill="#fff"/>
<rect x="203" y="374" width="1" height="1" fill="#fff"/>
<rect x="207" y="374" width="1" height="1" fill="#fff"/>
<rect x="211" y="374" width="1" height="1" fill="#fff"/>
<rect x="215" y="374" width="1" height="1" fill="#fff"/>
<rect x="219" y="374" width="1" height="1" fill="#fff"/>
<rect x="223" y="374" width="1" height="1" fill="#fff"/>
<rect x="227" y="374" width="1" height="1" fill="#fff"/>
<rect x="231" y="374" width="1" height="1" fill="#fff"/>
<rect x="235" y="374" width="1" height="1" fill="#fff"/>
<rect x="239" y="374" width="1" height="1" fill="#fff"/>
<rect x="243" y="374" width="1" height="1" fill="#fff"/>
<rect x="247" y="374" width="1" height="1" fill="#fff"/>
<rect x="251" y="374" width="1" height="1" fill="#fff"/>
<rect x="255" y="374" width="1" height="1" fill="#fff"/>
<rect x="259" y="374" width="1" height="1" fill="#fff"/>
<rect x="263" y="374" width="1" height="1" fill="#fff"/>
<rect x="267" y="374" width="1" height="1" fill="#fff"/>
<rect x="271" y="374" width="1" height="1" fill="#fff"/>
<rect x="275" y="374" width="1" height="1" fill="#fff"/>
<rect x="279" y="374" width="1" height="1" fill="#fff"/>
<rect x="283" y="374" width="1" height="1" fill="#fff"/>
<rect x="287" y="374" width="1" height="1" fill="#fff"/>
<rect x="291" y="374" width="1" height="1" fill="#fff"/>
<rect x="295" y="374" width="1" height="1" fill="#fff"/>
<rect x="299" y="374" width="1" height="1" fill="#fff"/>
<rect x="303" y="374" width="1" height="1" fill="#fff"/>
<rect x="307" y="374" width="1" height="1" fill="#fff"/>
<rect x="311" y="374" width="1" height="1" fill="#fff"/>
<rect x="315" y="374" width="1" height="1" fill="#fff"/>
<rect x="319" y="374" width="1" height="1" fill="#fff"/>
<rect x="323" y="374" width="1" height="1" fill="#fff"/>
<rect x="327" y="374" width="1" height="1" fill="#fff"/>
<rect x="331" y="374" width="1" height="1" fill="#fff"/>
<rect x="335" y="374" width="1" height="1" fill="#fff"/>
<rect x="339" y="374" width="1" height="1" fill="#fff"/>
<rect x="343" y="374" width="1" height="1" fill="#fff"/>
<rect x="347" y="374" width="1" height="1" fill="#fff"/>
<rect x="351" y="374" width="1" height="1" fill="#fff"/>
<rect x="355" y="374" width="1" height="1" fill="#fff"/>
<rect x="359" y="374" width="1" height="1" fill="#fff"/>
<rect x="363" y="374" width="1" height="1" fill="#fff"/>
<rect x="367" y="374" width="1" height="1" fill="#fff"/>
<rect x="371" y="374" width="1" height="1" fill="#fff"/>
<rect x="375" y="374" width="1" height="1" fill="#fff"/>
<rect x="379" y="374" width="1" height="1" fill="#fff"/>
<rect x="383" y="374" width="1" height="1" fill="#fff"/>
<rect x="387" y="374" width="1" height="1" fill="#fff"/>
<rect x="391" y="374" width="1" height="1" fill="#fff"/>
<rect x="395" y="374" width="1" height="1" fill="#fff"/>
<rect x="399" y="374" width="1" height="1" fill="#fff"/>
<rect x="403" y="374" width="1" height="1" fill="#fff"/>
<rect x="407" y="374" width="1" height="1" fill="#fff"/>
<rect x="411" y="374" width="1" height="1" fill="#fff"/>
<rect x="415" y="374" width="1" height="1" fill="#fff"/>
<rect x="419" y="374" width="1" height="1" fill="#fff"/>
<rect x="423" y="374" width="1" height="1" fill="#fff"/>
<rect x="427" y="374" width="1" height="1" fill="#fff"/>
<rect x="431" y="374" width="1" height="1" fill="#fff"/>
<rect x="435" y="374" width="1" height="1" fill="#fff"/>
<rect x="439" y="374" width="1" height="1" fill="#fff"/>
<rect x="443" y="374" width="1" height="1" fill="#fff"/>
<rect x="447" y="374" width="1" height="1" fill="#fff"/>
<rect x="451" y="374" width="1" height="1" fill="#fff"/>
<rect x="455" y="374" width="1" height="1" fill="#fff"/>
<rect x="459" y="374" width="1" height="1" fill="#fff"/>
<rect x="463" y="374" width="1" height="1" fill="#fff"/>
<rect x="467" y="374" width="1" height="1" fill="#fff"/>
<rect x="471" y="374" width="1" height="1" fill="#fff"/>
<rect x="475" y="374" width="1" height="1" fill="#fff"/>
<rect x="479" y="374" width="1" height="1" fill="#fff"/>
<rect x="483" y="374" width="1" height="1" fill="#fff"/>
<rect x="487" y="374" width="1" height="1" fill="#fff"/>
<rect x="491" y="374" width="1" height="1" fill="#fff"/>
<rect x="495" y="374" width="1" height="1" fill="#fff"/>
<rect x="499" y="374" width="1" height="1" fill="#fff"/>
<rect x="503" y="374" width="1" height="1" fill="#fff"/>
<rect x="507" y="374" width="1" height="1" fill="#fff"/>
<rect x="511" y="374" width="1" height="1" fill="#fff"/>
<rect x="515" y="374" width="1" height="1" fill="#fff"/>
<rect x="519" y="374" width="1" height="1" fill="#fff"/>
<rect x="523" y="374" width="1" height="1" fill="#fff"/>
<rect x="527" y="374" width="1" height="1" fill="#fff"/>
<rect x="531" y="374" width="1" height="1" fill="#fff"/>
<rect x="535" y="374" width="1" height="1" fill="#fff"/>
<rect x="539" y="374" width="1" height="1" fill="#fff"/>
<rect x="543" y="374" width="1" height="1" fill="#fff"/>
<rect x="547" y="374" width="1" height="1" fill="#fff"/>
<rect x="551" y="374" width="1" height="1" fill="#fff"/>
<rect x="555" y="374" width="1" height="1" fill="#fff"/>
<rect x="559" y="374" width="1" height="1" fill="#fff"/>
<rect x="563" y="374" width="1" height="1" fill="#fff"/>
<rect x="567" y="374" width="1" height="1" fill="#fff"/>
<rect x="571" y="374" width="1" height="1" fill="#fff"/>
<rect x="575" y="374" width="1" height="1" fill="#fff"/>
<rect x="579" y="374" width="1" height="1" fill="#fff"/>
<rect x="583" y="374" width="1" height="1" fill="#fff"/>
<rect x="587" y="374" width="1" height="1" fill="#fff"/>
<rect x="591" y="374" width="1" height="1" fill="#fff"/>
<rect x="595" y="374" width="1" height="1" fill="#fff"/>
<rect x="599" y="374" width="1" height="1" fill="#fff"/>
<rect x="603" y="374" width="1" height="1" fill="#fff"/>
<rect x="607" y="374" width="1" height="1" fill="#fff"/>
<rect x="611" y="374" width="1" height="1" fill="#fff"/>
<rect x="76" y="393" width="5" height="1" fill="#fff"/>
<rect x="614" y="393" width="5" height="1" fill="#fff"/>
<rect x="83" y="393" width="1" height="1" fill="#fff"/>
<rect x="87" y="393" width="1" height="1" fill="#fff"/>
<rect x="91" y="393" width="1" height="1" fill="#fff"/>
<rect x="95" y="393" width="1" height="1" fill="#fff"/>
<rect x="99" y="393" width="1" height="1" fill="#fff"/>
<rect x="103" y="393" width="1" height="1" fill="#fff"/>
<rect x="107" y="393" width="1" height="1" fill="#fff"/>
<rect x="111" y="393" width="1" height="1" fill="#fff"/>
<rect x="115" y="393" width="1" height="1" fill="#fff"/>
<rect x="119" y="393" width="1" height="1" fill="#fff"/>
<rect x="123" y="393" width="1" height="1" fill="#fff"/>
<rect x="127" y="393" width="1" height="1" fill="#fff"/>
<rect x="131" y="393" width="1" height="1" fill="#fff"/>
<rect x="135" y="393" width="1" height="1" fill="#fff"/>
<rect x="139" y="393" width="1" height="1" fill="#fff"/>
<rect x="143" y="393" width="1" height="1" fill="#fff"/>
<rect x="147" y="393" width="1" height="1" fill="#fff"/>
<rect x="151" y="393" width="1" height="1" fill="#fff"/>
<rect x="155" y="393" width="1" height="1" fill="#fff"/>
<rect x="159" y="393" width="1" height="1" fill="#fff"/>
<rect x="163" y="393" width="1" height="1" fill="#fff"/>
<rect x="167" y="393" width="1" height="1" fill="#fff"/>
<rect x="171" y="393" width="1" height="1" fill="#fff"/>
<rect x="175" y="393" width="1" height="1" fill="#fff"/>
<rect x="179" y="393" width="1" height="1" fill="#fff"/>
<rect x="183" y="393" width="1" height="1" fill="#fff"/>
<rect x="187" y="393" width="1" height="1" fill="#fff"/>
<rect x="191" y="393" width="1" height="1" fill="#fff"/>
<rect x="195" y="393" width="1" height="1" fill="#fff"/>
<rect x="199" y="393" width="1" height="1" fill="#fff"/>
<rect x="203" y="393" width="1" height="1" fill="#fff"/>
<rect x="207" y="393" width="1" height="1" fill="#fff"/>
<rect x="211" y="393" width="1" height="1" fill="#fff"/>
<rect x="215" y="393" width="1" height="1" fill="#fff"/>
<rect x="219" y="393" width="1" height="1" fill="#fff"/>
<rect x="223" y="393" width="1" height="1" fill="#fff"/>
<rect x="227" y="393" width="1" height="1" fill="#fff"/>
<rect x="231" y="393" width="1" height="1" fill="#fff"/>
<rect x="235" y="393" width="1" height="1" fill="#fff"/>
<rect x="239" y="393" width="1" height="1" fill="#fff"/>
<rect x="243" y="393" width="1" height="1" fill="#fff"/>
<rect x="247" y="393" width="1" height="1" fill="#fff"/>
<rect x="251" y="393" width="1" height="1" fill="#fff"/>
<rect x="255" y="393" width="1" height="1" fill="#fff"/>
<rect x="259" y="393" width="1" height="1" fill="#fff"/>
<rect x="263" y="393" width="1" height="1" fill="#fff"/>
<rect x="267" y="393" width="1" height="1" fill="#fff"/>
<rect x="271" y="393" width="1" height="1" fill="#fff"/>
<rect x="275" y="393" width="1" height="1" fill="#fff"/>
<rect x="279" y="393" width="1" height="1" fill="#fff"/>
<rect x="283" y="393" width="1" height="1" fill="#fff"/>
<rect x="287" y="393" width="1" height="1" fill="#fff"/>
<rect x="291" y="393" width="1" height="1" fill="#fff"/>
<rect x="295" y="393" width="1" height="1" fill="#fff"/>
<rect x="299" y="393" width="1" height="1" fill="#fff"/>
<rect x="303" y="393" width="1" height="1" fill="#fff"/>
<rect x="307" y="393" width="1" height="1" fill="#fff"/>
<rect x="311" y="393" width="1" height="1" fill="#fff"/>
<rect x="315" y="393" width="1" height="1" fill="#fff"/>
<rect x="319" y="393" width="1" height="1" fill="#fff"/>
<rect x="323" y="393" width="1" height="1" fill="#fff"/>
<rect x="327" y="393" width="1" height="1" fill="#fff"/>
<rect x="331" y="393" width="1" height="1" fill="#fff"/>
<rect x="335" y="393" width="1" height="1" fill="#fff"/>
<rect x="339" y="393" width="1" height="1" fill="#fff"/>
<rect x="343" y="393" width="1" height="1" fill="#fff"/>
<rect x="347" y="393" width="1" height="1" fill="#fff"/>
<rect x="351" y="393" width="1" height="1" fill="#fff"/>
<rect x="355" y="393" width="1" height="1" fill="#fff"/>
<rect x="359" y="393" width="1" height="1" fill="#fff"/>
<rect x="363" y="393" width="1" height="1" fill="#fff"/>
<rect x="367" y="393" width="1" height="1" fill="#fff"/>
<rect x="371" y="393" width="1" height="1" fill="#fff"/>
<rect x="375" y="393" width="1" height="1" fill="#fff"/>
<rect x="379" y="393" width="1" height="1" fill="#fff"/>
<rect x="383" y="393" width="1" height="1" fill="#fff"/>
<rect x="387" y="393" width="1" height="1" fill="#fff"/>
<rect x="391" y="393" width="1" height="1" fill="#fff"/>
<rect x="395" y="393" width="1" height="1" fill="#fff"/>
<rect x="399" y="393" width="1" height="1" fill="#fff"/>
<rect x="403" y="393" width="1" height="1" fill="#fff"/>
<rect x="407" y="393" width="1" height="1" fill="#fff"/>
<rect x="411" y="393" width="1" height="1" fill="#fff"/>
<rect x="415" y="393" width="1" height="1" fill="#fff"/>
<rect x="419" y="393" width="1" height="1" fill="#fff"/>
<rect x="423" y="393" width="1" height="1" fill="#fff"/>
<rect x="427" y="393" width="1" height="1" fill="#fff"/>
<rect x="431" y="393" width="1" height="1" fill="#fff"/>
<rect x="435" y="393" width="1" height="1" fill="#fff"/>
<rect x="439" y="393" width="1" height="1" fill="#fff"/>
<rect x="443" y="393" width="1" height="1" fill="#fff"/>
<rect x="447" y="393" width="1" height="1" fill="#fff"/>
<rect x="451" y="393" width="1" height="1" fill="#fff"/>
<rect x="455" y="393" width="1" height="1" fill="#fff"/>
<rect x="459" y="393" width="1" height="1" fill="#fff"/>
<rect x="463" y="393" width="1" height="1" fill="#fff"/>
<rect x="467" y="393" width="1" height="1" fill="#fff"/>
<rect x="471" y="393" width="1" height="1" fill="#fff"/>
<rect x="475" y="393" width="1" height="1" fill="#fff"/>
<rect x="479" y="393" width="1" height="1" fill="#fff"/>
<rect x="483" y="393" width="1" height="1" fill="#fff"/>
<rect x="487" y="393" width="1" height="1" fill="#fff"/>
<rect x="491" y="393" width="1" height="1" fill="#fff"/>
<rect x="495" y="393" width="1" height="1" fill="#fff"/>
<rect x="499" y="393" width="1" height="1" fill="#fff"/>
<rect x="503" y="393" width="1" height="1" fill="#fff"/>
<rect x="507" y="393" width="1" height="1" fill="#fff"/>
<rect x="511" y="393" width="1" height="1" fill="#fff"/>
<rect x="515" y="393" width="1" height="1" fill="#fff"/>
<rect x="519" y="393" width="1" height="1" fill="#fff"/>
<rect x="523" y="393" width="1" height="1" fill="#fff"/>
<rect x="527" y="393" width="1" height="1" fill="#fff"/>
<rect x="531" y="393" width="1" height="1" fill="#fff"/>
<rect x="535" y="393" width="1" height="1" fill="#fff"/>
<rect x="539" y="393" width="1" height="1" fill="#fff"/>
<rect x="543" y="393" width="1" height="1" fill="#fff"/>
<rect x="547" y="393" width="1" height="1" fill="#fff"/>
<rect x="551" y="393" width="1" height="1" fill="#fff"/>
<rect x="555" y="393" width="1" height="1" fill="#fff"/>
<rect x="559" y="393" width="1" height="1" fill="#fff"/>
<rect x="563" y="393" width="1" height="1" fill="#fff"/>
<rect x="567" y="393" width="1" height="1" fill="#fff"/>
<rect x="571" y="393" width="1" height="1" fill="#fff"/>
<rect x="575" y="393" width="1" height="1" fill="#fff"/>
<rect x="579" y="393" width="1" height="1" fill="#fff"/>
<rect x="583" y="393" width="1" height="1" fill="#fff"/>
<rect x="587" y="393" width="1" height="1" fill="#fff"/>
<rect x="591" y="393" width="1" height="1" fill="#fff"/>
<rect x="595" y="393" width="1" height="1" fill="#fff"/>
<rect x="599" y="393" width="1" height="1" fill="#fff"/>
<rect x="603" y="393" width="1" height="1" fill="#fff"/>
<rect x="607" y="393" width="1" height="1" fill="#fff"/>
<rect x="611" y="393" width="1" height="1" fill="#fff"/>
<rect x="76" y="411" width="5" height="1" fill="#fff"/>
<rect x="614" y="411" width="5" height="1" fill="#fff"/>
<rect x="83" y="411" width="1" height="1" fill="#fff"/>
<rect x="87" y="411" width="1" height="1" fill="#fff"/>
<rect x="91" y="411" width="1" height="1" fill="#fff"/>
<rect x="95" y="411" width="1" height="1" fill="#fff"/>
<rect x="99" y="411" width="1" height="1" fill="#fff"/>
<rect x="103" y="411" width="1" height="1" fill="#fff"/>
<rect x="107" y="411" width="1" height="1" fill="#fff"/>
<rect x="111" y="411" width="1" height="1" fill="#fff"/>
<rect x="115" y="411" width="1" height="1" fill="#fff"/>
<rect x="119" y="411" width="1" height="1" fill="#fff"/>
<rect x="123" y="411" width="1" height="1" fill="#fff"/>
<rect x="127" y="411" width="1" height="1" fill="#fff"/>
<rect x="131" y="411" width="1" height="1" fill="#fff"/>
<rect x="135" y="411" width="1" height="1" fill="#fff"/>
<rect x="139" y="411" width="1" height="1" fill="#fff"/>
<rect x="143" y="411" width="1" height="1" fill="#fff"/>
<rect x="147" y="411" width="1" height="1" fill="#fff"/>
<rect x="151" y="411" width="1" height="1" fill="#fff"/>
<rect x="155" y="411" width="1" height="1" fill="#fff"/>
<rect x="159" y="411" width="1" height="1" fill="#fff"/>
<rect x="163" y="411" width="1" height="1" fill="#fff"/>
<rect x="167" y="411" width="1" height="1" fill="#fff"/>
<rect x="171" y="411" width="1" height="1" fill="#fff"/>
<rect x="175" y="411" width="1" height="1" fill="#fff"/>
<rect x="179" y="411" width="1" height="1" fill="#fff"/>
<rect x="183" y="411" width="1" height="1" fill="#fff"/>
<rect x="187" y="411" width="1" height="1" fill="#fff"/>
<rect x="191" y="411" width="1" height="1" fill="#fff"/>
<rect x="195" y="411" width="1" height="1" fill="#fff"/>
<rect x="199" y="411" width="1" height="1" fill="#fff"/>
<rect x="203" y="411" width="1" height="1" fill="#fff"/>
<rect x="207" y="411" width="1" height="1" fill="#fff"/>
<rect x="211" y="411" width="1" height="1" fill="#fff"/>
<rect x="215" y="411" width="1" height="1" fill="#fff"/>
<rect x="219" y="411" width="1" height="1" fill="#fff"/>
<rect x="223" y="411" width="1" height="1" fill="#fff"/>
<rect x="227" y="411" width="1" height="1" fill="#fff"/>
<rect x="231" y="411" width="1" height="1" fill="#fff"/>
<rect x="235" y="411" width="1" height="1" fill="#fff"/>
<rect x="239" y="411" width="1" height="1" fill="#fff"/>
<rect x="243" y="411" width="1" height="1" fill="#fff"/>
<rect x="247" y="411" width="1" height="1" fill="#fff"/>
<rect x="251" y="411" width="1" height="1" fill="#fff"/>
<rect x="255" y="411" width="1" height="1" fill="#fff"/>
<rect x="259" y="411" width="1" height="1" fill="#fff"/>
<rect x="263" y="411" width="1" height="1" fill="#fff"/>
<rect x="267" y="411" width="1" height="1" fill="#fff"/>
<rect x="271" y="411" width="1" height="1" fill="#fff"/>
<rect x="275" y="411" width="1" height="1" fill="#fff"/>
<rect x="279" y="411" width="1" height="1" fill="#fff"/>
<rect x="283" y="411" width="1" height="1" fill="#fff"/>
<rect x="287" y="411" width="1" height="1" fill="#fff"/>
<rect x="291" y="411" width="1" height="1" fill="#fff"/>
<rect x="295" y="411" width="1" height="1" fill="#fff"/>
<rect x="299" y="411" width="1" height="1" fill="#fff"/>
<rect x="303" y="411" width="1" height="1" fill="#fff"/>
<rect x="307" y="411" width="1" height="1" fill="#fff"/>
<rect x="311" y="411" width="1" height="1" fill="#fff"/>
<rect x="315" y="411" width="1" height="1" fill="#fff"/>
<rect x="319" y="411" width="1" height="1" fill="#fff"/>
<rect x="323" y="411" width="1" height="1" fill="#fff"/>
<rect x="327" y="411" width="1" height="1" fill="#fff"/>
<rect x="331" y="411" width="1" height="1" fill="#fff"/>
<rect x="335" y="411" width="1" height="1" fill="#fff"/>
<rect x="339" y="411" width="1" height="1" fill="#fff"/>
<rect x="343" y="411" width="1" height="1" fill="#fff"/>
<rect x="347" y="411" width="1" height="1" fill="#fff"/>
<rect x="351" y="411" width="1" height="1" fill="#fff"/>
<rect x="355" y="411" width="1" height="1" fill="#fff"/>
<rect x="359" y="411" width="1" height="1" fill="#fff"/>
<rect x="363" y="411" width="1" height="1" fill="#fff"/>
<rect x="367" y="411" width="1" height="1" fill="#fff"/>
<rect x="371" y="411" width="1" height="1" fill="#fff"/>
<rect x="375" y="411" width="1" height="1" fill="#fff"/>
<rect x="379" y="411" width="1" height="1" fill="#fff"/>
<rect x="383" y="411" width="1" height="1" fill="#fff"/>
<rect x="387" y="411" width="1" height="1" fill="#fff"/>
<rect x="391" y="411" width="1" height="1" fill="#fff"/>
<rect x="395" y="411" width="1" height="1" fill="#fff"/>
<rect x="399" y="411" width="1" height="1" fill="#fff"/>
<rect x="403" y="411" width="1" height="1" fill="#fff"/>
<rect x="407" y="411" width="1" height="1" fill="#fff"/>
<rect x="411" y="411" width="1" height="1" fill="#fff"/>
<rect x="415" y="411" width="1" height="1" fill="#fff"/>
<rect x="419" y="411" width="1" height="1" fill="#fff"/>
<rect x="423" y="411" width="1" height="1" fill="#fff"/>
<rect x="427" y="411" width="1" height="1" fill="#fff"/>
<rect x="431" y="411" width="1" height="1" fill="#fff"/>
<rect x="435" y="411" width="1" height="1" fill="#fff"/>
<rect x="439" y="411" width="1" height="1" fill="#fff"/>
<rect x="443" y="411" width="1" height="1" fill="#fff"/>
<rect x="447" y="411" width="1" height="1" fill="#fff"/>
<rect x="451" y="411" width="1" height="1" fill="#fff"/>
<rect x="455" y="411" width="1" height="1" fill="#fff"/>
<rect x="459" y="411" width="1" height="1" fill="#fff"/>
<rect x="463" y="411" width="1" height="1" fill="#fff"/>
<rect x="467" y="411" width="1" height="1" fill="#fff"/>
<rect x="471" y="411" width="1" height="1" fill="#fff"/>
<rect x="475" y="411" width="1" height="1" fill="#fff"/>
<rect x="479" y="411" width="1" height="1" fill="#fff"/>
<rect x="483" y="411" width="1" height="1" fill="#fff"/>
<rect x="487" y="411" width="1" height="1" fill="#fff"/>
<rect x="491" y="411" width="1" height="1" fill="#fff"/>
<rect x="495" y="411" width="1" height="1" fill="#fff"/>
<rect x="499" y="411" width="1" height="1" fill="#fff"/>
<rect x="503" y="411" width="1" height="1" fill="#fff"/>
<rect x="507" y="411" width="1" height="1" fill="#fff"/>
<rect x="511" y="411" width="1" height="1" fill="#fff"/>
<rect x="515" y="411" width="1" height="1" fill="#fff"/>
<rect x="519" y="411" width="1" height="1" fill="#fff"/>
<rect x="523" y="411" width="1" height="1" fill="#fff"/>
<rect x="527" y="411" width="1" height="1" fill="#fff"/>
<rect x="531" y="411" width="1" height="1" fill="#fff"/>
<rect x="535" y="411" width="1" height="1" fill="#fff"/>
<rect x="539" y="411" width="1" height="1" fill="#fff"/>
<rect x="543" y="411" width="1" height="1" fill="#fff"/>
<rect x="547" y="411" width="1" height="1" fill="#fff"/>
<rect x="551" y="411" width="1" height="1" fill="#fff"/>
<rect x="555" y="411" width="1" height="1" fill="#fff"/>
<rect x="559" y="411" width="1" height="1" fill="#fff"/>
<rect x="563" y="411" width="1" height="1" fill="#fff"/>
<rect x="567" y="411" width="1" height="1" fill="#fff"/>
<rect x="571" y="411" width="1" height="1" fill="#fff"/>
<rect x="575" y="411" width="1" height="1" fill="#fff"/>
<rect x="579" y="411" width="1" height="1" fill="#fff"/>
<rect x="583" y="411" width="1" height="1" fill="#fff"/>
<rect x="587" y="411" width="1" height="1" fill="#fff"/>
<rect x="591" y="411" width="1" height="1" fill="#fff"/>
<rect x="595" y="411" width="1" height="1" fill="#fff"/>
<rect x="599" y="411" width="1" height="1" fill="#fff"/>
<rect x="603" y="411" width="1" height="1" fill="#fff"/>
<rect x="607" y="411" width="1" height="1" fill="#fff"/>
<rect x="611" y="411" width="1" height="1" fill="#fff"/>
<rect x="76" y="430" width="5" height="1" fill="#fff"/>
<rect x="614" y="430" width="5" height="1" fill="#fff"/>
<rect x="83" y="430" width="1" height="1" fill="#fff"/>
<rect x="87" y="430" width="1" height="1" fill="#fff"/>
<rect x="91" y="430" width="1" height="1" fill="#fff"/>
<rect x="95" y="430" width="1" height="1" fill="#fff"/>
<rect x="99" y="430" width="1" height="1" fill="#fff"/>
<rect x="103" y="430" width="1" height="1" fill="#fff"/>
<rect x="107" y="430" width="1" height="1" fill="#fff"/>
<rect x="111" y="430" width="1" height="1" fill="#fff"/>
<rect x="115" y="430" width="1" height="1" fill="#fff"/>
<rect x="119" y="430" width="1" height="1" fill="#fff"/>
<rect x="123" y="430" width="1" height="1" fill="#fff"/>
<rect x="127" y="430" width="1" height="1" fill="#fff"/>
<rect x="131" y="430" width="1" height="1" fill="#fff"/>
<rect x="135" y="430" width="1" height="1" fill="#fff"/>
<rect x="139" y="430" width="1" height="1" fill="#fff"/>
<rect x="143" y="430" width="1" height="1" fill="#fff"/>
<rect x="147" y="430" width="1" height="1" fill="#fff"/>
<rect x="151" y="430" width="1" height="1" fill="#fff"/>
<rect x="155" y="430" width="1" height="1" fill="#fff"/>
<rect x="159" y="430" width="1" height="1" fill="#fff"/>
<rect x="163" y="430" width="1" height="1" fill="#fff"/>
<rect x="167" y="430" width="1" height="1" fill="#fff"/>
<rect x="171" y="430" width="1" height="1" fill="#fff"/>
<rect x="175" y="430" width="1" height="1" fill="#fff"/>
<rect x="179" y="430" width="1" height="1" fill="#fff"/>
<rect x="183" y="430" width="1" height="1" fill="#fff"/>
<rect x="187" y="430" width="1" height="1" fill="#fff"/>
<rect x="191" y="430" width="1" height="1" fill="#fff"/>
<rect x="195" y="430" width="1" height="1" fill="#fff"/>
<rect x="199" y="430" width="1" height="1" fill="#fff"/>
<rect x="203" y="430" width="1" height="1" fill="#fff"/>
<rect x="207" y="430" width="1" height="1" fill="#fff"/>
<rect x="211" y="430" width="1" height="1" fill="#fff"/>
<rect x="215" y="430" width="1" height="1" fill="#fff"/>
<rect x="219" y="430" width="1" height="1" fill="#fff"/>
<rect x="223" y="430" width="1" height="1" fill="#fff"/>
<rect x="227" y="430" width="1" height="1" fill="#fff"/>
<rect x="231" y="430" width="1" height="1" fill="#fff"/>
<rect x="235" y="430" width="1" height="1" fill="#fff"/>
<rect x="239" y="430" width="1" height="1" fill="#fff"/>
<rect x="243" y="430" width="1" height="1" fill="#fff"/>
<rect x="247" y="430" width="1" height="1" fill="#fff"/>
<rect x="251" y="430" width="1" height="1" fill="#fff"/>
<rect x="255" y="430" width="1" height="1" fill="#fff"/>
<rect x="259" y="430" width="1" height="1" fill="#fff"/>
<rect x="263" y="430" width="1" height="1" fill="#fff"/>
<rect x="267" y="430" width="1" height="1" fill="#fff"/>
<rect x="271" y="430" width="1" height="1" fill="#fff"/>
<rect x="275" y="430" width="1" height="1" fill="#fff"/>
<rect x="279" y="430" width="1" height="1" fill="#fff"/>
<rect x="283" y="430" width="1" height="1" fill="#fff"/>
<rect x="287" y="430" width="1" height="1" fill="#fff"/>
<rect x="291" y="430" width="1" height="1" fill="#fff"/>
<rect x="295" y="430" width="1" height="1" fill="#fff"/>
<rect x="299" y="430" width="1" height="1" fill="#fff"/>
<rect x="303" y="430" width="1" height="1" fill="#fff"/>
<rect x="307" y="430" width="1" height="1" fill="#fff"/>
<rect x="311" y="430" width="1" height="1" fill="#fff"/>
<rect x="315" y="430" width="1" height="1" fill="#fff"/>
<rect x="319" y="430" width="1" height="1" fill="#fff"/>
<rect x="323" y="430" width="1" height="1" fill="#fff"/>
<rect x="327" y="430" width="1" height="1" fill="#fff"/>
<rect x="331" y="430" width="1" height="1" fill="#fff"/>
<rect x="335" y="430" width="1" height="1" fill="#fff"/>
<rect x="339" y="430" width="1" height="1" fill="#fff"/>
<rect x="343" y="430" width="1" height="1" fill="#fff"/>
<rect x="347" y="430" width="1" height="1" fill="#fff"/>
<rect x="351" y="430" width="1" height="1" fill="#fff"/>
<rect x="355" y="430" width="1" height="1" fill="#fff"/>
<rect x="359" y="430" width="1" height="1" fill="#fff"/>
<rect x="363" y="430" width="1" height="1" fill="#fff"/>
<rect x="367" y="430" width="1" height="1" fill="#fff"/>
<rect x="371" y="430" width="1" height="1" fill="#fff"/>
<rect x="375" y="430" width="1" height="1" fill="#fff"/>
<rect x="379" y="430" width="1" height="1" fill="#fff"/>
<rect x="383" y="430" width="1" height="1" fill="#fff"/>
<rect x="387" y="430" width="1" height="1" fill="#fff"/>
<rect x="391" y="430" width="1" height="1" fill="#fff"/>
<rect x="395" y="430" width="1" height="1" fill="#fff"/>
<rect x="399" y="430" width="1" height="1" fill="#fff"/>
<rect x="403" y="430" width="1" height="1" fill="#fff"/>
<rect x="407" y="430" width="1" height="1" fill="#fff"/>
<rect x="411" y="430" width="1" height="1" fill="#fff"/>
<rect x="415" y="430" width="1" height="1" fill="#fff"/>
<rect x="419" y="430" width="1" height="1" fill="#fff"/>
<rect x="423" y="430" width="1" height="1" fill="#fff"/>
<rect x="427" y="430" width="1" height="1" fill="#fff"/>
<rect x="431" y="430" width="1" height="1" fill="#fff"/>
<rect x="435" y="430" width="1" height="1" fill="#fff"/>
<rect x="439" y="430" width="1" height="1" fill="#fff"/>
<rect x="443" y="430" width="1" height="1" fill="#fff"/>
<rect x="447" y="430" width="1" height="1" fill="#fff"/>
<rect x="451" y="430" width="1" height="1" fill="#fff"/>
<rect x="455" y="430" width="1" height="1" fill="#fff"/>
<rect x="459" y="430" width="1" height="1" fill="#fff"/>
<rect x="463" y="430" width="1" height="1" fill="#fff"/>
<rect x="467" y="430" width="1" height="1" fill="#fff"/>
<rect x="471" y="430" width="1" height="1" fill="#fff"/>
<rect x="475" y="430" width="1" height="1" fill="#fff"/>
<rect x="479" y="430" width="1" height="1" fill="#fff"/>
<rect x="483" y="430" width="1" height="1" fill="#fff"/>
<rect x="487" y="430" width="1" height="1" fill="#fff"/>
<rect x="491" y="430" width="1" height="1" fill="#fff"/>
<rect x="495" y="430" width="1" height="1" fill="#fff"/>
<rect x="499" y="430" width="1" height="1" fill="#fff"/>
<rect x="503" y="430" width="1" height="1" fill="#fff"/>
<rect x="507" y="430" width="1" height="1" fill="#fff"/>
<rect x="511" y="430" width="1" height="1" fill="#fff"/>
<rect x="515" y="430" width="1" height="1" fill="#fff"/>
<rect x="519" y="430" width="1" height="1" fill="#fff"/>
<rect x="523" y="430" width="1" height="1" fill="#fff"/>
<rect x="527" y="430" width="1" height="1" fill="#fff"/>
<rect x="531" y="430" width="1" height="1" fill="#fff"/>
<rect x="535" y="430" width="1" height="1" fill="#fff"/>
<rect x="539" y="430" width="1" height="1" fill="#fff"/>
<rect x="543" y="430" width="1" height="1" fill="#fff"/>
<rect x="547" y="430" width="1" height="1" fill="#fff"/>
<rect x="551" y="430" width="1" height="1" fill="#fff"/>
<rect x="555" y="430" width="1" height="1" fill="#fff"/>
<rect x="559" y="430" width="1" height="1" fill="#fff"/>
<rect x="563" y="430" width="1" height="1" fill="#fff"/>
<rect x="567" y="430" width="1" height="1" fill="#fff"/>
<rect x="571" y="430" width="1" height="1" fill="#fff"/>
<rect x="575" y="430" width="1" height="1" fill="#fff"/>
<rect x="579" y="430" width="1" height="1" fill="#fff"/>
<rect x="583" y="430" width="1" height="1" fill="#fff"/>
<rect x="587" y="430" width="1" height="1" fill="#fff"/>
<rect x="591" y="430" width="1" height="1" fill="#fff"/>
<rect x="595" y="430" width="1" height="1" fill="#fff"/>
<rect x="599" y="430" width="1" height="1" fill="#fff"/>
<rect x="603" y="430" width="1" height="1" fill="#fff"/>
<rect x="607" y="430" width="1" height="1" fill="#fff"/>
<rect x="611" y="430" width="1" height="1" fill="#fff"/>
<rect x="76" y="449" width="5" height="1" fill="#fff"/>
<rect x="614" y="449" width="5" height="1" fill="#fff"/>
<rect x="83" y="449" width="1" height="1" fill="#fff"/>
<rect x="87" y="449" width="1" height="1" fill="#fff"/>
<rect x="91" y="449" width="1" height="1" fill="#fff"/>
<rect x="95" y="449" width="1" height="1" fill="#fff"/>
<rect x="99" y="449" width="1" height="1" fill="#fff"/>
<rect x="103" y="449" width="1" height="1" fill="#fff"/>
<rect x="107" y="449" width="1" height="1" fill="#fff"/>
<rect x="111" y="449" width="1" height="1" fill="#fff"/>
<rect x="115" y="449" width="1" height="1" fill="#fff"/>
<rect x="119" y="449" width="1" height="1" fill="#fff"/>
<rect x="123" y="449" width="1" height="1" fill="#fff"/>
<rect x="127" y="449" width="1" height="1" fill="#fff"/>
<rect x="131" y="449" width="1" height="1" fill="#fff"/>
<rect x="135" y="449" width="1" height="1" fill="#fff"/>
<rect x="139" y="449" width="1" height="1" fill="#fff"/>
<rect x="143" y="449" width="1" height="1" fill="#fff"/>
<rect x="147" y="449" width="1" height="1" fill="#fff"/>
<rect x="151" y="449" width="1" height="1" fill="#fff"/>
<rect x="155" y="449" width="1" height="1" fill="#fff"/>
<rect x="159" y="449" width="1" height="1" fill="#fff"/>
<rect x="163" y="449" width="1" height="1" fill="#fff"/>
<rect x="167" y="449" width="1" height="1" fill="#fff"/>
<rect x="171" y="449" width="1" height="1" fill="#fff"/>
<rect x="175" y="449" width="1" height="1" fill="#fff"/>
<rect x="179" y="449" width="1" height="1" fill="#fff"/>
<rect x="183" y="449" width="1" height="1" fill="#fff"/>
<rect x="187" y="449" width="1" height="1" fill="#fff"/>
<rect x="191" y="449" width="1" height="1" fill="#fff"/>
<rect x="195" y="449" width="1" height="1" fill="#fff"/>
<rect x="199" y="449" width="1" height="1" fill="#fff"/>
<rect x="203" y="449" width="1" height="1" fill="#fff"/>
<rect x="207" y="449" width="1" height="1" fill="#fff"/>
<rect x="211" y="449" width="1" height="1" fill="#fff"/>
<rect x="215" y="449" width="1" height="1" fill="#fff"/>
<rect x="219" y="449" width="1" height="1" fill="#fff"/>
<rect x="223" y="449" width="1" height="1" fill="#fff"/>
<rect x="227" y="449" width="1" height="1" fill="#fff"/>
<rect x="231" y="449" width="1" height="1" fill="#fff"/>
<rect x="235" y="449" width="1" height="1" fill="#fff"/>
<rect x="239" y="449" width="1" height="1" fill="#fff"/>
<rect x="243" y="449" width="1" height="1" fill="#fff"/>
<rect x="247" y="449" width="1" height="1" fill="#fff"/>
<rect x="251" y="449" width="1" height="1" fill="#fff"/>
<rect x="255" y="449" width="1" height="1" fill="#fff"/>
<rect x="259" y="449" width="1" height="1" fill="#fff"/>
<rect x="263" y="449" width="1" height="1" fill="#fff"/>
<rect x="267" y="449" width="1" height="1" fill="#fff"/>
<rect x="271" y="449" width="1" height="1" fill="#fff"/>
<rect x="275" y="449" width="1" height="1" fill="#fff"/>
<rect x="279" y="449" width="1" height="1" fill="#fff"/>
<rect x="283" y="449" width="1" height="1" fill="#fff"/>
<rect x="287" y="449" width="1" height="1" fill="#fff"/>
<rect x="291" y="449" width="1" height="1" fill="#fff"/>
<rect x="295" y="449" width="1" height="1" fill="#fff"/>
<rect x="299" y="449" width="1" height="1" fill="#fff"/>
<rect x="303" y="449" width="1" height="1" fill="#fff"/>
<rect x="307" y="449" width="1" height="1" fill="#fff"/>
<rect x="311" y="449" width="1" height="1" fill="#fff"/>
<rect x="315" y="449" width="1" height="1" fill="#fff"/>
<rect x="319" y="449" width="1" height="1" fill="#fff"/>
<rect x="323" y="449" width="1" height="1" fill="#fff"/>
<rect x="327" y="449" width="1" height="1" fill="#fff"/>
<rect x="331" y="449" width="1" height="1" fill="#fff"/>
<rect x="335" y="449" width="1" height="1" fill="#fff"/>
<rect x="339" y="449" width="1" height="1" fill="#fff"/>
<rect x="343" y="449" width="1" height="1" fill="#fff"/>
<rect x="347" y="449" width="1" height="1" fill="#fff"/>
<rect x="351" y="449" width="1" height="1" fill="#fff"/>
<rect x="355" y="449" width="1" height="1" fill="#fff"/>
<rect x="359" y="449" width="1" height="1" fill="#fff"/>
<rect x="363" y="449" width="1" height="1" fill="#fff"/>
<rect x="367" y="449" width="1" height="1" fill="#fff"/>
<rect x="371" y="449" width="1" height="1" fill="#fff"/>
<rect x="375" y="449" width="1" height="1" fill="#fff"/>
<rect x="379" y="449" width="1" height="1" fill="#fff"/>
<rect x="383" y="449" width="1" height="1" fill="#fff"/>
<rect x="387" y="449" width="1" height="1" fill="#fff"/>
<rect x="391" y="449" width="1" height="1" fill="#fff"/>
<rect x="395" y="449" width="1" height="1" fill="#fff"/>
<rect x="399" y="449" width="1" height="1" fill="#fff"/>
<rect x="403" y="449" width="1" height="1" fill="#fff"/>
<rect x="407" y="449" width="1" height="1" fill="#fff"/>
<rect x="411" y="449" width="1" height="1" fill="#fff"/>
<rect x="415" y="449" width="1" height="1" fill="#fff"/>
<rect x="419" y="449" width="1" height="1" fill="#fff"/>
<rect x="423" y="449" width="1" height="1" fill="#fff"/>
<rect x="427" y="449" width="1" height="1" fill="#fff"/>
<rect x="431" y="449" width="1" height="1" fill="#fff"/>
<rect x="435" y="449" width="1" height="1" fill="#fff"/>
<rect x="439" y="449" width="1" height="1" fill="#fff"/>
<rect x="443" y="449" width="1" height="1" fill="#fff"/>
<rect x="447" y="449" width="1" height="1" fill="#fff"/>
<rect x="451" y="449" width="1" height="1" fill="#fff"/>
<rect x="455" y="449" width="1" height="1" fill="#fff"/>
<rect x="459" y="449" width="1" height="1" fill="#fff"/>
<rect x="463" y="449" width="1" height="1" fill="#fff"/>
<rect x="467" y="449" width="1" height="1" fill="#fff"/>
<rect x="471" y="449" width="1" height="1" fill="#fff"/>
<rect x="475" y="449" width="1" height="1" fill="#fff"/>
<rect x="479" y="449" width="1" height="1" fill="#fff"/>
<rect x="483" y="449" width="1" height="1" fill="#fff"/>
<rect x="487" y="449" width="1" height="1" fill="#fff"/>
<rect x="491" y="449" width="1" height="1" fill="#fff"/>
<rect x="495" y="449" width="1" height="1" fill="#fff"/>
<rect x="499" y="449" width="1" height="1" fill="#fff"/>
<rect x="503" y="449" width="1" height="1" fill="#fff"/>
<rect x="507" y="449" width="1" height="1" fill="#fff"/>
<rect x="511" y="449" width="1" height="1" fill="#fff"/>
<rect x="515" y="449" width="1" height="1" fill="#fff"/>
<rect x="519" y="449" width="1" height="1" fill="#fff"/>
<rect x="523" y="449" width="1" height="1" fill="#fff"/>
<rect x="527" y="449" width="1" height="1" fill="#fff"/>
<rect x="531" y="449" width="1" height="1" fill="#fff"/>
<rect x="535" y="449" width="1" height="1" fill="#fff"/>
<rect x="539" y="449" width="1" height="1" fill="#fff"/>
<rect x="543" y="449" width="1" height="1" fill="#fff"/>
<rect x="547" y="449" width="1" height="1" fill="#fff"/>
<rect x="551" y="449" width="1" height="1" fill="#fff"/>
<rect x="555" y="449" width="1" height="1" fill="#fff"/>
<rect x="559" y="449" width="1" height="1" fill="#fff"/>
<rect x="563" y="449" width="1" height="1" fill="#fff"/>
<rect x="567" y="449" width="1" height="1" fill="#fff"/>
<rect x="571" y="449" width="1" height="1" fill="#fff"/>
<rect x="575" y="449" width="1" height="1" fill="#fff"/>
<rect x="579" y="449" width="1" height="1" fill="#fff"/>
<rect x="583" y="449" width="1" height="1" fill="#fff"/>
<rect x="587" y="449" width="1" height="1" fill="#fff"/>
<rect x="591" y="449" width="1" height="1" fill="#fff"/>
<rect x="595" y="449" width="1" height="1" fill="#fff"/>
<rect x="599" y="449" width="1" height="1" fill="#fff"/>
<rect x="603" y="449" width="1" height="1" fill="#fff"/>
<rect x="607" y="449" width="1" height="1" fill="#fff"/>
<rect x="611" y="449" width="1" height="1" fill="#fff"/>
<rect x="76" y="467" width="5" height="1" fill="#fff"/>
<rect x="614" y="467" width="5" height="1" fill="#fff"/>
<rect x="83" y="467" width="1" height="1" fill="#fff"/>
<rect x="87" y="467" width="1" height="1" fill="#fff"/>
<rect x="91" y="467" width="1" height="1" fill="#fff"/>
<rect x="95" y="467" width="1" height="1" fill="#fff"/>
<rect x="99" y="467" width="1" height="1" fill="#fff"/>
<rect x="103" y="467" width="1" height="1" fill="#fff"/>
<rect x="107" y="467" width="1" height="1" fill="#fff"/>
<rect x="111" y="467" width="1" height="1" fill="#fff"/>
<rect x="115" y="467" width="1" height="1" fill="#fff"/>
<rect x="119" y="467" width="1" height="1" fill="#fff"/>
<rect x="123" y="467" width="1" height="1" fill="#fff"/>
<rect x="127" y="467" width="1" height="1" fill="#fff"/>
<rect x="131" y="467" width="1" height="1" fill="#fff"/>
<rect x="135" y="467" width="1" height="1" fill="#fff"/>
<rect x="139" y="467" width="1" height="1" fill="#fff"/>
<rect x="143" y="467" width="1" height="1" fill="#fff"/>
<rect x="147" y="467" width="1" height="1" fill="#fff"/>
<rect x="151" y="467" width="1" height="1" fill="#fff"/>
<rect x="155" y="467" width="1" height="1" fill="#fff"/>
<rect x="159" y="467" width="1" height="1" fill="#fff"/>
<rect x="163" y="467" width="1" height="1" fill="#fff"/>
<rect x="167" y="467" width="1" height="1" fill="#fff"/>
<rect x="171" y="467" width="1" height="1" fill="#fff"/>
<rect x="175" y="467" width="1" height="1" fill="#fff"/>
<rect x="179" y="467" width="1" height="1" fill="#fff"/>
<rect x="183" y="467" width="1" height="1" fill="#fff"/>
<rect x="187" y="467" width="1" height="1" fill="#fff"/>
<rect x="191" y="467" width="1" height="1" fill="#fff"/>
<rect x="195" y="467" width="1" height="1" fill="#fff"/>
<rect x="199" y="467" width="1" height="1" fill="#fff"/>
<rect x="203" y="467" width="1" height="1" fill="#fff"/>
<rect x="207" y="467" width="1" height="1" fill="#fff"/>
<rect x="211" y="467" width="1" height="1" fill="#fff"/>
<rect x="215" y="467" width="1" height="1" fill="#fff"/>
<rect x="219" y="467" width="1" height="1" fill="#fff"/>
<rect x="223" y="467" width="1" height="1" fill="#fff"/>
<rect x="227" y="467" width="1" height="1" fill="#fff"/>
<rect x="231" y="467" width="1" height="1" fill="#fff"/>
<rect x="235" y="467" width="1" height="1" fill="#fff"/>
<rect x="239" y="467" width="1" height="1" fill="#fff"/>
<rect x="243" y="467" width="1" height="1" fill="#fff"/>
<rect x="247" y="467" width="1" height="1" fill="#fff"/>
<rect x="251" y="467" width="1" height="1" fill="#fff"/>
<rect x="255" y="467" width="1" height="1" fill="#fff"/>
<rect x="259" y="467" width="1" height="1" fill="#fff"/>
<rect x="263" y="467" width="1" height="1" fill="#fff"/>
<rect x="267" y="467" width="1" height="1" fill="#fff"/>
<rect x="271" y="467" width="1" height="1" fill="#fff"/>
<rect x="275" y="467" width="1" height="1" fill="#fff"/>
<rect x="279" y="467" width="1" height="1" fill="#fff"/>
<rect x="283" y="467" width="1" height="1" fill="#fff"/>
<rect x="287" y="467" width="1" height="1" fill="#fff"/>
<rect x="291" y="467" width="1" height="1" fill="#fff"/>
<rect x="295" y="467" width="1" height="1" fill="#fff"/>
<rect x="299" y="467" width="1" height="1" fill="#fff"/>
<rect x="303" y="467" width="1" height="1" fill="#fff"/>
<rect x="307" y="467" width="1" height="1" fill="#fff"/>
<rect x="311" y="467" width="1" height="1" fill="#fff"/>
<rect x="315" y="467" width="1" height="1" fill="#fff"/>
<rect x="319" y="467" width="1" height="1" fill="#fff"/>
<rect x="323" y="467" width="1" height="1" fill="#fff"/>
<rect x="327" y="467" width="1" height="1" fill="#fff"/>
<rect x="331" y="467" width="1" height="1" fill="#fff"/>
<rect x="335" y="467" width="1" height="1" fill="#fff"/>
<rect x="339" y="467" width="1" height="1" fill="#fff"/>
<rect x="343" y="467" width="1" height="1" fill="#fff"/>
<rect x="347" y="467" width="1" height="1" fill="#fff"/>
<rect x="351" y="467" width="1" height="1" fill="#fff"/>
<rect x="355" y="467" width="1" height="1" fill="#fff"/>
<rect x="359" y="467" width="1" height="1" fill="#fff"/>
<rect x="363" y="467" width="1" height="1" fill="#fff"/>
<rect x="367" y="467" width="1" height="1" fill="#fff"/>
<rect x="371" y="467" width="1" height="1" fill="#fff"/>
<rect x="375" y="467" width="1" height="1" fill="#fff"/>
<rect x="379" y="467" width="1" height="1" fill="#fff"/>
<rect x="383" y="467" width="1" height="1" fill="#fff"/>
<rect x="387" y="467" width="1" height="1" fill="#fff"/>
<rect x="391" y="467" width="1" height="1" fill="#fff"/>
<rect x="395" y="467" width="1" height="1" fill="#fff"/>
<rect x="399" y="467" width="1" height="1" fill="#fff"/>
<rect x="403" y="467" width="1" height="1" fill="#fff"/>
<rect x="407" y="467" width="1" height="1" fill="#fff"/>
<rect x="411" y="467" width="1" height="1" fill="#fff"/>
<rect x="415" y="467" width="1" height="1" fill="#fff"/>
<rect x="419" y="467" width="1" height="1" fill="#fff"/>
<rect x="423" y="467" width="1" height="1" fill="#fff"/>
<rect x="427" y="467" width="1" height="1" fill="#fff"/>
<rect x="431" y="467" width="1" height="1" fill="#fff"/>
<rect x="435" y="467" width="1" height="1" fill="#fff"/>
<rect x="439" y="467" width="1" height="1" fill="#fff"/>
<rect x="443" y="467" width="1" height="1" fill="#fff"/>
<rect x="447" y="467" width="1" height="1" fill="#fff"/>
<rect x="451" y="467" width="1" height="1" fill="#fff"/>
<rect x="455" y="467" width="1" height="1" fill="#fff"/>
<rect x="459" y="467" width="1" height="1" fill="#fff"/>
<rect x="463" y="467" width="1" height="1" fill="#fff"/>
<rect x="467" y="467" width="1" height="1" fill="#fff"/>
<rect x="471" y="467" width="1" height="1" fill="#fff"/>
<rect x="475" y="467" width="1" height="1" fill="#fff"/>
<rect x="479" y="467" width="1" height="1" fill="#fff"/>
<rect x="483" y="467" width="1" height="1" fill="#fff"/>
<rect x="487" y="467" width="1" height="1" fill="#fff"/>
<rect x="491" y="467" width="1" height="1" fill="#fff"/>
<rect x="495" y="467" width="1" height="1" fill="#fff"/>
<rect x="499" y="467" width="1" height="1" fill="#fff"/>
<rect x="503" y="467" width="1" height="1" fill="#fff"/>
<rect x="507" y="467" width="1" height="1" fill="#fff"/>
<rect x="511" y="467" width="1" height="1" fill="#fff"/>
<rect x="515" y="467" width="1" height="1" fill="#fff"/>
<rect x="519" y="467" width="1" height="1" fill="#fff"/>
<rect x="523" y="467" width="1" height="1" fill="#fff"/>
<rect x="527" y="467" width="1" height="1" fill="#fff"/>
<rect x="531" y="467" width="1" height="1" fill="#fff"/>
<rect x="535" y="467" width="1" height="1" fill="#fff"/>
<rect x="539" y="467" width="1" height="1" fill="#fff"/>
<rect x="543" y="467" width="1" height="1" fill="#fff"/>
<rect x="547" y="467" width="1" height="1" fill="#fff"/>
<rect x="551" y="467" width="1" height="1" fill="#fff"/>
<rect x="555" y="467" width="1" height="1" fill="#fff"/>
<rect x="559" y="467" width="1" height="1" fill="#fff"/>
<rect x="563" y="467" width="1" height="1" fill="#fff"/>
<rect x="567" y="467" width="1" height="1" fill="#fff"/>
<rect x="571" y="467" width="1" height="1" fill="#fff"/>
<rect x="575" y="467" width="1" height="1" fill="#fff"/>
<rect x="579" y="467" width="1" height="1" fill="#fff"/>
<rect x="583" y="467" width="1" height="1" fill="#fff"/>
<rect x="587" y="467" width="1" height="1" fill="#fff"/>
<rect x="591" y="467" width="1" height="1" fill="#fff"/>
<rect x="595" y="467" width="1" height="1" fill="#fff"/>
<rect x="599" y="467" width="1" height="1" fill="#fff"/>
<rect x="603" y="467" width="1" height="1" fill="#fff"/>
<rect x="607" y="467" width="1" height="1" fill="#fff"/>
<rect x="611" y="467" width="1" height="1" fill="#fff"/>
<rect x="76" y="486" width="5" height="1" fill="#fff"/>
<rect x="614" y="486" width="5" height="1" fill="#fff"/>
<rect x="83" y="486" width="1" height="1" fill="#fff"/>
<rect x="87" y="486" width="1" height="1" fill="#fff"/>
<rect x="91" y="486" width="1" height="1" fill="#fff"/>
<rect x="95" y="486" width="1" height="1" fill="#fff"/>
<rect x="99" y="486" width="1" height="1" fill="#fff"/>
<rect x="103" y="486" width="1" height="1" fill="#fff"/>
<rect x="107" y="486" width="1" height="1" fill="#fff"/>
<rect x="111" y="486" width="1" height="1" fill="#fff"/>
<rect x="115" y="486" width="1" height="1" fill="#fff"/>
<rect x="119" y="486" width="1" height="1" fill="#fff"/>
<rect x="123" y="486" width="1" height="1" fill="#fff"/>
<rect x="127" y="486" width="1" height="1" fill="#fff"/>
<rect x="131" y="486" width="1" height="1" fill="#fff"/>
<rect x="135" y="486" width="1" height="1" fill="#fff"/>
<rect x="139" y="486" width="1" height="1" fill="#fff"/>
<rect x="143" y="486" width="1" height="1" fill="#fff"/>
<rect x="147" y="486" width="1" height="1" fill="#fff"/>
<rect x="151" y="486" width="1" height="1" fill="#fff"/>
<rect x="155" y="486" width="1" height="1" fill="#fff"/>
<rect x="159" y="486" width="1" height="1" fill="#fff"/>
<rect x="163" y="486" width="1" height="1" fill="#fff"/>
<rect x="167" y="486" width="1" height="1" fill="#fff"/>
<rect x="171" y="486" width="1" height="1" fill="#fff"/>
<rect x="175" y="486" width="1" height="1" fill="#fff"/>
<rect x="179" y="486" width="1" height="1" fill="#fff"/>
<rect x="183" y="486" width="1" height="1" fill="#fff"/>
<rect x="187" y="486" width="1" height="1" fill="#fff"/>
<rect x="191" y="486" width="1" height="1" fill="#fff"/>
<rect x="195" y="486" width="1" height="1" fill="#fff"/>
<rect x="199" y="486" width="1" height="1" fill="#fff"/>
<rect x="203" y="486" width="1" height="1" fill="#fff"/>
<rect x="207" y="486" width="1" height="1" fill="#fff"/>
<rect x="211" y="486" width="1" height="1" fill="#fff"/>
<rect x="215" y="486" width="1" height="1" fill="#fff"/>
<rect x="219" y="486" width="1" height="1" fill="#fff"/>
<rect x="223" y="486" width="1" height="1" fill="#fff"/>
<rect x="227" y="486" width="1" height="1" fill="#fff"/>
<rect x="231" y="486" width="1" height="1" fill="#fff"/>
<rect x="235" y="486" width="1" height="1" fill="#fff"/>
<rect x="239" y="486" width="1" height="1" fill="#fff"/>
<rect x="243" y="486" width="1" height="1" fill="#fff"/>
<rect x="247" y="486" width="1" height="1" fill="#fff"/>
<rect x="251" y="486" width="1" height="1" fill="#fff"/>
<rect x="255" y="486" width="1" height="1" fill="#fff"/>
<rect x="259" y="486" width="1" height="1" fill="#fff"/>
<rect x="263" y="486" width="1" height="1" fill="#fff"/>
<rect x="267" y="486" width="1" height="1" fill="#fff"/>
<rect x="271" y="486" width="1" height="1" fill="#fff"/>
<rect x="275" y="486" width="1" height="1" fill="#fff"/>
<rect x="279" y="486" width="1" height="1" fill="#fff"/>
<rect x="283" y="486" width="1" height="1" fill="#fff"/>
<rect x="287" y="486" width="1" height="1" fill="#fff"/>
<rect x="291" y="486" width="1" height="1" fill="#fff"/>
<rect x="295" y="486" width="1" height="1" fill="#fff"/>
<rect x="299" y="486" width="1" height="1" fill="#fff"/>
<rect x="303" y="486" width="1" height="1" fill="#fff"/>
<rect x="307" y="486" width="1" height="1" fill="#fff"/>
<rect x="311" y="486" width="1" height="1" fill="#fff"/>
<rect x="315" y="486" width="1" height="1" fill="#fff"/>
<rect x="319" y="486" width="1" height="1" fill="#fff"/>
<rect x="323" y="486" width="1" height="1" fill="#fff"/>
<rect x="327" y="486" width="1" height="1" fill="#fff"/>
<rect x="331" y="486" width="1" height="1" fill="#fff"/>
<rect x="335" y="486" width="1" height="1" fill="#fff"/>
<rect x="339" y="486" width="1" height="1" fill="#fff"/>
<rect x="343" y="486" width="1" height="1" fill="#fff"/>
<rect x="347" y="486" width="1" height="1" fill="#fff"/>
<rect x="351" y="486" width="1" height="1" fill="#fff"/>
<rect x="355" y="486" width="1" height="1" fill="#fff"/>
<rect x="359" y="486" width="1" height="1" fill="#fff"/>
<rect x="363" y="486" width="1" height="1" fill="#fff"/>
<rect x="367" y="486" width="1" height="1" fill="#fff"/>
<rect x="371" y="486" width="1" height="1" fill="#fff"/>
<rect x="375" y="486" width="1" height="1" fill="#fff"/>
<rect x="379" y="486" width="1" height="1" fill="#fff"/>
<rect x="383" y="486" width="1" height="1" fill="#fff"/>
<rect x="387" y="486" width="1" height="1" fill="#fff"/>
<rect x="391" y="486" width="1" height="1" fill="#fff"/>
<rect x="395" y="486" width="1" height="1" fill="#fff"/>
<rect x="399" y="486" width="1" height="1" fill="#fff"/>
<rect x="403" y="486" width="1" height="1" fill="#fff"/>
<rect x="407" y="486" width="1" height="1" fill="#fff"/>
<rect x="411" y="486" width="1" height="1" fill="#fff"/>
<rect x="415" y="486" width="1" height="1" fill="#fff"/>
<rect x="419" y="486" width="1" height="1" fill="#fff"/>
<rect x="423" y="486" width="1" height="1" fill="#fff"/>
<rect x="427" y="486" width="1" height="1" fill="#fff"/>
<rect x="431" y="486" width="1" height="1" fill="#fff"/>
<rect x="435" y="486" width="1" height="1" fill="#fff"/>
<rect x="439" y="486" width="1" height="1" fill="#fff"/>
<rect x="443" y="486" width="1" height="1" fill="#fff"/>
<rect x="447" y="486" width="1" height="1" fill="#fff"/>
<rect x="451" y="486" width="1" height="1" fill="#fff"/>
<rect x="455" y="486" width="1" height="1" fill="#fff"/>
<rect x="459" y="486" width="1" height="1" fill="#fff"/>
<rect x="463" y="486" width="1" height="1" fill="#fff"/>
<rect x="467" y="486" width="1" height="1" fill="#fff"/>
<rect x="471" y="486" width="1" height="1" fill="#fff"/>
<rect x="475" y="486" width="1" height="1" fill="#fff"/>
<rect x="479" y="486" width="1" height="1" fill="#fff"/>
<rect x="483" y="486" width="1" height="1" fill="#fff"/>
<rect x="487" y="486" width="1" height="1" fill="#fff"/>
<rect x="491" y="486" width="1" height="1" fill="#fff"/>
<rect x="495" y="486" width="1" height="1" fill="#fff"/>
<rect x="499" y="486" width="1" height="1" fill="#fff"/>
<rect x="503" y="486" width="1" height="1" fill="#fff"/>
<rect x="507" y="486" width="1" height="1" fill="#fff"/>
<rect x="511" y="486" width="1" height="1" fill="#fff"/>
<rect x="515" y="486" width="1" height="1" fill="#fff"/>
<rect x="519" y="486" width="1" height="1" fill="#fff"/>
<rect x="523" y="486" width="1" height="1" fill="#fff"/>
<rect x="527" y="486" width="1" height="1" fill="#fff"/>
<rect x="531" y="486" width="1" height="1" fill="#fff"/>
<rect x="535" y="486" width="1" height="1" fill="#fff"/>
<rect x="539" y="486" width="1" height="1" fill="#fff"/>
<rect x="543" y="486" width="1" height="1" fill="#fff"/>
<rect x="547" y="486" width="1" height="1" fill="#fff"/>
<rect x="551" y="486" width="1" height="1" fill="#fff"/>
<rect x="555" y="486" width="1" height="1" fill="#fff"/>
<rect x="559" y="486" width="1" height="1" fill="#fff"/>
<rect x="563" y="486" width="1" height="1" fill="#fff"/>
<rect x="567" y="486" width="1" height="1" fill="#fff"/>
<rect x="571" y="486" width="1" height="1" fill="#fff"/>
<rect x="575" y="486" width="1" height="1" fill="#fff"/>
<rect x="579" y="486" width="1" height="1" fill="#fff"/>
<rect x="583" y="486" width="1" height="1" fill="#fff"/>
<rect x="587" y="486" width="1" height="1" fill="#fff"/>
<rect x="591" y="486" width="1" height="1" fill="#fff"/>
<rect x="595" y="486" width="1" height="1" fill="#fff"/>
<rect x="599" y="486" width="1" height="1" fill="#fff"/>
<rect x="603" y="486" width="1" height="1" fill="#fff"/>
<rect x="607" y="486" width="1" height="1" fill="#fff"/>
<rect x="611" y="486" width="1" height="1" fill="#fff"/>
<rect x="76" y="504" width="5" height="1" fill="#fff"/>
<rect x="614" y="504" width="5" height="1" fill="#fff"/>
<rect x="83" y="504" width="1" height="1" fill="#fff"/>
<rect x="87" y="504" width="1" height="1" fill="#fff"/>
<rect x="91" y="504" width="1" height="1" fill="#fff"/>
<rect x="95" y="504" width="1" height="1" fill="#fff"/>
<rect x="99" y="504" width="1" height="1" fill="#fff"/>
<rect x="103" y="504" width="1" height="1" fill="#fff"/>
<rect x="107" y="504" width="1" height="1" fill="#fff"/>
<rect x="111" y="504" width="1" height="1" fill="#fff"/>
<rect x="115" y="504" width="1" height="1" fill="#fff"/>
<rect x="119" y="504" width="1" height="1" fill="#fff"/>
<rect x="123" y="504" width="1" height="1" fill="#fff"/>
<rect x="127" y="504" width="1" height="1" fill="#fff"/>
<rect x="131" y="504" width="1" height="1" fill="#fff"/>
<rect x="135" y="504" width="1" height="1" fill="#fff"/>
<rect x="139" y="504" width="1" height="1" fill="#fff"/>
<rect x="143" y="504" width="1" height="1" fill="#fff"/>
<rect x="147" y="504" width="1" height="1" fill="#fff"/>
<rect x="151" y="504" width="1" height="1" fill="#fff"/>
<rect x="155" y="504" width="1" height="1" fill="#fff"/>
<rect x="159" y="504" width="1" height="1" fill="#fff"/>
<rect x="163" y="504" width="1" height="1" fill="#fff"/>
<rect x="167" y="504" width="1" height="1" fill="#fff"/>
<rect x="171" y="504" width="1" height="1" fill="#fff"/>
<rect x="175" y="504" width="1" height="1" fill="#fff"/>
<rect x="179" y="504" width="1" height="1" fill="#fff"/>
<rect x="183" y="504" width="1" height="1" fill="#fff"/>
<rect x="187" y="504" width="1" height="1" fill="#fff"/>
<rect x="191" y="504" width="1" height="1" fill="#fff"/>
<rect x="195" y="504" width="1" height="1" fill="#fff"/>
<rect x="199" y="504" width="1" height="1" fill="#fff"/>
<rect x="203" y="504" width="1" height="1" fill="#fff"/>
<rect x="207" y="504" width="1" height="1" fill="#fff"/>
<rect x="211" y="504" width="1" height="1" fill="#fff"/>
<rect x="215" y="504" width="1" height="1" fill="#fff"/>
<rect x="219" y="504" width="1" height="1" fill="#fff"/>
<rect x="223" y="504" width="1" height="1" fill="#fff"/>
<rect x="227" y="504" width="1" height="1" fill="#fff"/>
<rect x="231" y="504" width="1" height="1" fill="#fff"/>
<rect x="235" y="504" width="1" height="1" fill="#fff"/>
<rect x="239" y="504" width="1" height="1" fill="#fff"/>
<rect x="243" y="504" width="1" height="1" fill="#fff"/>
<rect x="247" y="504" width="1" height="1" fill="#fff"/>
<rect x="251" y="504" width="1" height="1" fill="#fff"/>
<rect x="255" y="504" width="1" height="1" fill="#fff"/>
<rect x="259" y="504" width="1" height="1" fill="#fff"/>
<rect x="263" y="504" width="1" height="1" fill="#fff"/>
<rect x="267" y="504" width="1" height="1" fill="#fff"/>
<rect x="271" y="504" width="1" height="1" fill="#fff"/>
<rect x="275" y="504" width="1" height="1" fill="#fff"/>
<rect x="279" y="504" width="1" height="1" fill="#fff"/>
<rect x="283" y="504" width="1" height="1" fill="#fff"/>
<rect x="287" y="504" width="1" height="1" fill="#fff"/>
<rect x="291" y="504" width="1" height="1" fill="#fff"/>
<rect x="295" y="504" width="1" height="1" fill="#fff"/>
<rect x="299" y="504" width="1" height="1" fill="#fff"/>
<rect x="303" y="504" width="1" height="1" fill="#fff"/>
<rect x="307" y="504" width="1" height="1" fill="#fff"/>
<rect x="311" y="504" width="1" height="1" fill="#fff"/>
<rect x="315" y="504" width="1" height="1" fill="#fff"/>
<rect x="319" y="504" width="1" height="1" fill="#fff"/>
<rect x="323" y="504" width="1" height="1" fill="#fff"/>
<rect x="327" y="504" width="1" height="1" fill="#fff"/>
<rect x="331" y="504" width="1" height="1" fill="#fff"/>
<rect x="335" y="504" width="1" height="1" fill="#fff"/>
<rect x="339" y="504" width="1" height="1" fill="#fff"/>
<rect x="343" y="504" width="1" height="1" fill="#fff"/>
<rect x="347" y="504" width="1" height="1" fill="#fff"/>
<rect x="351" y="504" width="1" height="1" fill="#fff"/>
<rect x="355" y="504" width="1" height="1" fill="#fff"/>
<rect x="359" y="504" width="1" height="1" fill="#fff"/>
<rect x="363" y="504" width="1" height="1" fill="#fff"/>
<rect x="367" y="504" width="1" height="1" fill="#fff"/>
<rect x="371" y="504" width="1" height="1" fill="#fff"/>
<rect x="375" y="504" width="1" height="1" fill="#fff"/>
<rect x="379" y="504" width="1" height="1" fill="#fff"/>
<rect x="383" y="504" width="1" height="1" fill="#fff"/>
<rect x="387" y="504" width="1" height="1" fill="#fff"/>
<rect x="391" y="504" width="1" height="1" fill="#fff"/>
<rect x="395" y="504" width="1" height="1" fill="#fff"/>
<rect x="399" y="504" width="1" height="1" fill="#fff"/>
<rect x="403" y="504" width="1" height="1" fill="#fff"/>
<rect x="407" y="504" width="1" height="1" fill="#fff"/>
<rect x="411" y="504" width="1" height="1" fill="#fff"/>
<rect x="415" y="504" width="1" height="1" fill="#fff"/>
<rect x="419" y="504" width="1" height="1" fill="#fff"/>
<rect x="423" y="504" width="1" height="1" fill="#fff"/>
<rect x="427" y="504" width="1" height="1" fill="#fff"/>
<rect x="431" y="504" width="1" height="1" fill="#fff"/>
<rect x="435" y="504" width="1" height="1" fill="#fff"/>
<rect x="439" y="504" width="1" height="1" fill="#fff"/>
<rect x="443" y="504" width="1" height="1" fill="#fff"/>
<rect x="447" y="504" width="1" height="1" fill="#fff"/>
<rect x="451" y="504" width="1" height="1" fill="#fff"/>
<rect x="455" y="504" width="1" height="1" fill="#fff"/>
<rect x="459" y="504" width="1" height="1" fill="#fff"/>
<rect x="463" y="504" width="1" height="1" fill="#fff"/>
<rect x="467" y="504" width="1" height="1" fill="#fff"/>
<rect x="471" y="504" width="1" height="1" fill="#fff"/>
<rect x="475" y="504" width="1" height="1" fill="#fff"/>
<rect x="479" y="504" width="1" height="1" fill="#fff"/>
<rect x="483" y="504" width="1" height="1" fill="#fff"/>
<rect x="487" y="504" width="1" height="1" fill="#fff"/>
<rect x="491" y="504" width="1" height="1" fill="#fff"/>
<rect x="495" y="504" width="1" height="1" fill="#fff"/>
<rect x="499" y="504" width="1" height="1" fill="#fff"/>
<rect x="503" y="504" width="1" height="1" fill="#fff"/>
<rect x="507" y="504" width="1" height="1" fill="#fff"/>
<rect x="511" y="504" width="1" height="1" fill="#fff"/>
<rect x="515" y="504" width="1" height="1" fill="#fff"/>
<rect x="519" y="504" width="1" height="1" fill="#fff"/>
<rect x="523" y="504" width="1" height="1" fill="#fff"/>
<rect x="527" y="504" width="1" height="1" fill="#fff"/>
<rect x="531" y="504" width="1" height="1" fill="#fff"/>
<rect x="535" y="504" width="1" height="1" fill="#fff"/>
<rect x="539" y="504" width="1" height="1" fill="#fff"/>
<rect x="543" y="504" width="1" height="1" fill="#fff"/>
<rect x="547" y="504" width="1" height="1" fill="#fff"/>
<rect x="551" y="504" width="1" height="1" fill="#fff"/>
<rect x="555" y="504" width="1" height="1" fill="#fff"/>
<rect x="559" y="504" width="1" height="1" fill="#fff"/>
<rect x="563" y="504" width="1" height="1" fill="#fff"/>
<rect x="567" y="504" width="1" height="1" fill="#fff"/>
<rect x="571" y="504" width="1" height="1" fill="#fff"/>
<rect x="575" y="504" width="1" height="1" fill="#fff"/>
<rect x="579" y="504" width="1" height="1" fill="#fff"/>
<rect x="583" y="504" width="1" height="1" fill="#fff"/>
<rect x="587" y="504" width="1" height="1" fill="#fff"/>
<rect x="591" y="504" width="1" height="1" fill="#fff"/>
<rect x="595" y="504" width="1" height="1" fill="#fff"/>
<rect x="599" y="504" width="1" height="1" fill="#fff"/>
<rect x="603" y="504" width="1" height="1" fill="#fff"/>
<rect x="607" y="504" width="1" height="1" fill="#fff"/>
<rect x="611" y="504" width="1" height="1" fill="#fff"/>
<rect x="76" y="523" width="5" height="1" fill="#fff"/>
<rect x="614" y="523" width="5" height="1" fill="#fff"/>
<rect x="83" y="523" width="1" height="1" fill="#fff"/>
<rect x="87" y="523" width="1" height="1" fill="#fff"/>
<rect x="91" y="523" width="1" height="1" fill="#fff"/>
<rect x="95" y="523" width="1" height="1" fill="#fff"/>
<rect x="99" y="523" width="1" height="1" fill="#fff"/>
<rect x="103" y="523" width="1" height="1" fill="#fff"/>
<rect x="107" y="523" width="1" height="1" fill="#fff"/>
<rect x="111" y="523" width="1" height="1" fill="#fff"/>
<rect x="115" y="523" width="1" height="1" fill="#fff"/>
<rect x="119" y="523" width="1" height="1" fill="#fff"/>
<rect x="123" y="523" width="1" height="1" fill="#fff"/>
<rect x="127" y="523" width="1" height="1" fill="#fff"/>
<rect x="131" y="523" width="1" height="1" fill="#fff"/>
<rect x="135" y="523" width="1" height="1" fill="#fff"/>
<rect x="139" y="523" width="1" height="1" fill="#fff"/>
<rect x="143" y="523" width="1" height="1" fill="#fff"/>
<rect x="147" y="523" width="1" height="1" fill="#fff"/>
<rect x="151" y="523" width="1" height="1" fill="#fff"/>
<rect x="155" y="523" width="1" height="1" fill="#fff"/>
<rect x="159" y="523" width="1" height="1" fill="#fff"/>
<rect x="163" y="523" width="1" height="1" fill="#fff"/>
<rect x="167" y="523" width="1" height="1" fill="#fff"/>
<rect x="171" y="523" width="1" height="1" fill="#fff"/>
<rect x="175" y="523" width="1" height="1" fill="#fff"/>
<rect x="179" y="523" width="1" height="1" fill="#fff"/>
<rect x="183" y="523" width="1" height="1" fill="#fff"/>
<rect x="187" y="523" width="1" height="1" fill="#fff"/>
<rect x="191" y="523" width="1" height="1" fill="#fff"/>
<rect x="195" y="523" width="1" height="1" fill="#fff"/>
<rect x="199" y="523" width="1" height="1" fill="#fff"/>
<rect x="203" y="523" width="1" height="1" fill="#fff"/>
<rect x="207" y="523" width="1" height="1" fill="#fff"/>
<rect x="211" y="523" width="1" height="1" fill="#fff"/>
<rect x="215" y="523" width="1" height="1" fill="#fff"/>
<rect x="219" y="523" width="1" height="1" fill="#fff"/>
<rect x="223" y="523" width="1" height="1" fill="#fff"/>
<rect x="227" y="523" width="1" height="1" fill="#fff"/>
<rect x="231" y="523" width="1" height="1" fill="#fff"/>
<rect x="235" y="523" width="1" height="1" fill="#fff"/>
<rect x="239" y="523" width="1" height="1" fill="#fff"/>
<rect x="243" y="523" width="1" height="1" fill="#fff"/>
<rect x="247" y="523" width="1" height="1" fill="#fff"/>
<rect x="251" y="523" width="1" height="1" fill="#fff"/>
<rect x="255" y="523" width="1" height="1" fill="#fff"/>
<rect x="259" y="523" width="1" height="1" fill="#fff"/>
<rect x="263" y="523" width="1" height="1" fill="#fff"/>
<rect x="267" y="523" width="1" height="1" fill="#fff"/>
<rect x="271" y="523" width="1" height="1" fill="#fff"/>
<rect x="275" y="523" width="1" height="1" fill="#fff"/>
<rect x="279" y="523" width="1" height="1" fill="#fff"/>
<rect x="283" y="523" width="1" height="1" fill="#fff"/>
<rect x="287" y="523" width="1" height="1" fill="#fff"/>
<rect x="291" y="523" width="1" height="1" fill="#fff"/>
<rect x="295" y="523" width="1" height="1" fill="#fff"/>
<rect x="299" y="523" width="1" height="1" fill="#fff"/>
<rect x="303" y="523" width="1" height="1" fill="#fff"/>
<rect x="307" y="523" width="1" height="1" fill="#fff"/>
<rect x="311" y="523" width="1" height="1" fill="#fff"/>
<rect x="315" y="523" width="1" height="1" fill="#fff"/>
<rect x="319" y="523" width="1" height="1" fill="#fff"/>
<rect x="323" y="523" width="1" height="1" fill="#fff"/>
<rect x="327" y="523" width="1" height="1" fill="#fff"/>
<rect x="331" y="523" width="1" height="1" fill="#fff"/>
<rect x="335" y="523" width="1" height="1" fill="#fff"/>
<rect x="339" y="523" width="1" height="1" fill="#fff"/>
<rect x="343" y="523" width="1" height="1" fill="#fff"/>
<rect x="347" y="523" width="1" height="1" fill="#fff"/>
<rect x="351" y="523" width="1" height="1" fill="#fff"/>
<rect x="355" y="523" width="1" height="1" fill="#fff"/>
<rect x="359" y="523" width="1" height="1" fill="#fff"/>
<rect x="363" y="523" width="1" height="1" fill="#fff"/>
<rect x="367" y="523" width="1" height="1" fill="#fff"/>
<rect x="371" y="523" width="1" height="1" fill="#fff"/>
<rect x="375" y="523" width="1" height="1" fill="#fff"/>
<rect x="379" y="523" width="1" height="1" fill="#fff"/>
<rect x="383" y="523" width="1" height="1" fill="#fff"/>
<rect x="387" y="523" width="1" height="1" fill="#fff"/>
<rect x="391" y="523" width="1" height="1" fill="#fff"/>
<rect x="395" y="523" width="1" height="1" fill="#fff"/>
<rect x="399" y="523" width="1" height="1" fill="#fff"/>
<rect x="403" y="523" width="1" height="1" fill="#fff"/>
<rect x="407" y="523" width="1" height="1" fill="#fff"/>
<rect x="411" y="523" width="1" height="1" fill="#fff"/>
<rect x="415" y="523" width="1" height="1" fill="#fff"/>
<rect x="419" y="523" width="1" height="1" fill="#fff"/>
<rect x="423" y="523" width="1" height="1" fill="#fff"/>
<rect x="427" y="523" width="1" height="1" fill="#fff"/>
<rect x="431" y="523" width="1" height="1" fill="#fff"/>
<rect x="435" y="523" width="1" height="1" fill="#fff"/>
<rect x="439" y="523" width="1" height="1" fill="#fff"/>
<rect x="443" y="523" width="1" height="1" fill="#fff"/>
<rect x="447" y="523" width="1" height="1" fill="#fff"/>
<rect x="451" y="523" width="1" height="1" fill="#fff"/>
<rect x="455" y="523" width="1" height="1" fill="#fff"/>
<rect x="459" y="523" width="1" height="1" fill="#fff"/>
<rect x="463" y="523" width="1" height="1" fill="#fff"/>
<rect x="467" y="523" width="1" height="1" fill="#fff"/>
<rect x="471" y="523" width="1" height="1" fill="#fff"/>
<rect x="475" y="523" width="1" height="1" fill="#fff"/>
<rect x="479" y="523" width="1" height="1" fill="#fff"/>
<rect x="483" y="523" width="1" height="1" fill="#fff"/>
<rect x="487" y="523" width="1" height="1" fill="#fff"/>
<rect x="491" y="523" width="1" height="1" fill="#fff"/>
<rect x="495" y="523" width="1" height="1" fill="#fff"/>
<rect x="499" y="523" width="1" height="1" fill="#fff"/>
<rect x="503" y="523" width="1" height="1" fill="#fff"/>
<rect x="507" y="523" width="1" height="1" fill="#fff"/>
<rect x="511" y="523" width="1" height="1" fill="#fff"/>
<rect x="515" y="523" width="1" height="1" fill="#fff"/>
<rect x="519" y="523" width="1" height="1" fill="#fff"/>
<rect x="523" y="523" width="1" height="1" fill="#fff"/>
<rect x="527" y="523" width="1" height="1" fill="#fff"/>
<rect x="531" y="523" width="1" height="1" fill="#fff"/>
<rect x="535" y="523" width="1" height="1" fill="#fff"/>
<rect x="539" y="523" width="1" height="1" fill="#fff"/>
<rect x="543" y="523" width="1" height="1" fill="#fff"/>
<rect x="547" y="523" width="1" height="1" fill="#fff"/>
<rect x="551" y="523" width="1" height="1" fill="#fff"/>
<rect x="555" y="523" width="1" height="1" fill="#fff"/>
<rect x="559" y="523" width="1" height="1" fill="#fff"/>
<rect x="563" y="523" width="1" height="1" fill="#fff"/>
<rect x="567" y="523" width="1" height="1" fill="#fff"/>
<rect x="571" y="523" width="1" height="1" fill="#fff"/>
<rect x="575" y="523" width="1" height="1" fill="#fff"/>
<rect x="579" y="523" width="1" height="1" fill="#fff"/>
<rect x="583" y="523" width="1" height="1" fill="#fff"/>
<rect x="587" y="523" width="1" height="1" fill="#fff"/>
<rect x="591" y="523" width="1" height="1" fill="#fff"/>
<rect x="595" y="523" width="1" height="1" fill="#fff"/>
<rect x="599" y="523" width="1" height="1" fill="#fff"/>
<rect x="603" y="523" width="1" height="1" fill="#fff"/>
<rect x="607" y="523" width="1" height="1" fill="#fff"/>
<rect x="611" y="523" width="1" height="1" fill="#fff"/>
<rect x="76" y="365" width="3" height="1" fill="#fff"/>
<rect x="616" y="365" width="3" height="1" fill="#fff"/>
<rect x="76" y="383" width="3" height="1" fill="#fff"/>
<rect x="616" y="383" width="3" height="1" fill="#fff"/>
<rect x="76" y="402" width="3" height="1" fill="#fff"/>
<rect x="616" y="402" width="3" height="1" fill="#fff"/>
<rect x="76" y="421" width="3" height="1" fill="#fff"/>
<rect x="616" y="421" width="3" height="1" fill="#fff"/>
<rect x="76" y="439" width="3" height="1" fill="#fff"/>
<rect x="616" y="439" width="3" height="1" fill="#fff"/>
<rect x="76" y="458" width="3" height="1" fill="#fff"/>
<rect x="616" y="458" width="3" height="1" fill="#fff"/>
<rect x="76" y="476" width="3" height="1" fill="#fff"/>
<rect x="616" y="476" width="3" height="1" fill="#fff"/>
<rect x="76" y="495" width="3" height="1" fill="#fff"/>
<rect x="616" y="495" width="3" height="1" fill="#fff"/>
<rect x="76" y="514" width="3" height="1" fill="#fff"/>
<rect x="616" y="514" width="3" height="1" fill="#fff"/>
<rect x="76" y="532" width="3" height="1" fill="#fff"/>
<rect x="616" y="532" width="3" height="1" fill="#fff"/>
<text x="62" y="376.7" font-size="10" fill="#fff" text-anchor="middle" stroke="#fff" stroke-width="0.4">180<tspan font-size='6' dy='-4.5'>o</tspan></text>
<text x="61.5" y="395.7" font-size="10" fill="#fff" text-anchor="middle" stroke="#fff" stroke-width="0.4">0<tspan font-size='6' dy='-4.5'>o</tspan></text>
<text x="62" y="525.7" font-size="10" fill="#fff" text-anchor="middle" stroke="#fff" stroke-width="0.4">180<tspan font-size='6' dy='-4.5'>o</tspan></text>
<text x="61.5" y="543.7" font-size="10" fill="#fff" text-anchor="middle" stroke="#fff" stroke-width="0.4">0<tspan font-size='6' dy='-4.5'>o</tspan></text>
<text x="38.4" y="449" font-size="15" fill="#fff" text-anchor="middle" textLength="88.6" lengthAdjust="spacingAndGlyphs" transform="rotate(-90 38.4 449)" stroke="#fff" stroke-width="0.35">Cassini Attitude</text>
<rect x="621" y="357" width="3" height="9" fill="#50af00"/>
<rect x="621" y="366" width="3" height="9" fill="#ff00ff"/>
<rect x="621" y="375" width="3" height="10" fill="#14aaf5"/>
<rect x="621" y="385" width="3" height="9" fill="#ff0000"/>
<rect x="621" y="394" width="3" height="9" fill="#9c9c9c"/>
<rect x="621" y="403" width="3" height="9" fill="#ff8c00"/>
<rect x="621" y="412" width="3" height="10" fill="#50af00"/>
<rect x="621" y="422" width="3" height="9" fill="#ff00ff"/>
<rect x="621" y="431" width="3" height="9" fill="#14aaf5"/>
<rect x="621" y="440" width="3" height="9" fill="#ff0000"/>
<rect x="621" y="449" width="3" height="10" fill="#9c9c9c"/>
<rect x="621" y="459" width="3" height="9" fill="#ff8c00"/>
<rect x="621" y="468" width="3" height="9" fill="#50af00"/>
<rect x="621" y="477" width="3" height="9" fill="#ff00ff"/>
<rect x="621" y="486" width="3" height="9" fill="#14aaf5"/>
<rect x="621" y="495" width="3" height="10" fill="#ff0000"/>
<rect x="621" y="505" width="3" height="9" fill="#9c9c9c"/>
<rect x="621" y="514" width="3" height="9" fill="#ff8c00"/>
<rect x="621" y="523" width="3" height="9" fill="#50af00"/>
<rect x="621" y="532" width="3" height="10" fill="#ff00ff"/>
<text x="628" y="369.2" font-size="12.4" fill="#fff" textLength="62.3" lengthAdjust="spacingAndGlyphs" stroke="#fff" stroke-width="0.45">Spin/P_CK</text>
<text x="628" y="387.75" font-size="12.4" fill="#fff" textLength="66.4" lengthAdjust="spacingAndGlyphs" stroke="#fff" stroke-width="0.45">-X_toSatum</text>
<text x="628" y="406.3" font-size="12.4" fill="#fff" textLength="66.4" lengthAdjust="spacingAndGlyphs" stroke="#fff" stroke-width="0.45">-Y_toSatum</text>
<text x="628" y="424.85" font-size="12.4" fill="#fff" textLength="66.4" lengthAdjust="spacingAndGlyphs" stroke="#fff" stroke-width="0.45">-Z_toSatum</text>
<text x="628" y="443.4" font-size="12.4" fill="#fff" textLength="52" lengthAdjust="spacingAndGlyphs" stroke="#fff" stroke-width="0.45">-X_toSun</text>
<text x="628" y="461.95" font-size="12.4" fill="#fff" textLength="52" lengthAdjust="spacingAndGlyphs" stroke="#fff" stroke-width="0.45">-Y_toSun</text>
<text x="628" y="480.5" font-size="12.4" fill="#fff" textLength="52" lengthAdjust="spacingAndGlyphs" stroke="#fff" stroke-width="0.45">-Z_toSun</text>
<text x="628" y="499.04999999999995" font-size="12.4" fill="#fff" textLength="55" lengthAdjust="spacingAndGlyphs" stroke="#fff" stroke-width="0.45">-X_toNEP</text>
<text x="628" y="517.6" font-size="12.4" fill="#fff" textLength="55" lengthAdjust="spacingAndGlyphs" stroke="#fff" stroke-width="0.45">-Y_toNEP</text>
<text x="628" y="536.15" font-size="12.4" fill="#fff" textLength="55" lengthAdjust="spacingAndGlyphs" stroke="#fff" stroke-width="0.45">-Z_toNEP</text>
<polyline points="75.0,384.5 305.4,384.5 312.6,390.0 315.0,387.5 320.6,387.5 323.0,383.5" fill="none" stroke="#ff0000" stroke-width="1"/>
<polyline points="323.0,383.5 362.2,383.5" fill="none" stroke="#14aaf5" stroke-width="1"/>
<polyline points="362.2,383.5 364.6,387.5 596.3,387.5 600.0,390.5 607.3,384.5 619.0,384.5" fill="none" stroke="#ff0000" stroke-width="1"/>
<polyline points="75.0,395.5 305.4,395.5 311.0,402.4" fill="none" stroke="#9c9c9c" stroke-width="1"/>
<polyline points="311.0,402.4 314.2,407.2 315.0,408.5 320.6,408.5 322.2,411.5 362.2,411.5 363.8,409.5 594.8,409.5 599.2,405.9 602.0,402.5" fill="none" stroke="#ff8c00" stroke-width="1"/>
<polyline points="602.0,402.5 606.5,395.5 619.0,395.5" fill="none" stroke="#9c9c9c" stroke-width="1"/>
<polyline points="75.0,419.5 306.2,419.5 311.0,416.5 315.8,420.0 321.4,420.0 323.0,422.0" fill="none" stroke="#50af00" stroke-width="1"/>
<polyline points="323.0,422.5 362.2,422.5" fill="none" stroke="#ff00ff" stroke-width="1"/>
<polyline points="362.2,422.0 364.6,420.3 366.0,421.5 384.6,421.5" fill="none" stroke="#50af00" stroke-width="1"/>
<polyline points="384.6,421.5 594.8,421.5" fill="none" stroke="#ff00ff" stroke-width="1"/>
<polyline points="594.8,421.5 601.4,417.3 608.0,420.5 619.0,420.5" fill="none" stroke="#50af00" stroke-width="1"/>
<polyline points="75.0,439.5 305.4,439.5" fill="none" stroke="#ff0000" stroke-width="1"/>
<polyline points="305.4,439.5 310.2,439.5" fill="none" stroke="#14aaf5" stroke-width="1"/>
<polyline points="310.2,439.5 314.0,443.5 320.6,443.5 322.2,448.5 362.2,448.5 364.6,443.5 596.3,443.5 602.0,440.3 603.0,439.5" fill="none" stroke="#ff0000" stroke-width="1"/>
<polyline points="603.0,439.5 607.3,439.5" fill="none" stroke="#14aaf5" stroke-width="1"/>
<polyline points="607.3,439.5 619.0,439.5" fill="none" stroke="#ff0000" stroke-width="1"/>
<polyline points="75.0,458.5 306.2,458.5 308.0,456.0" fill="none" stroke="#ff8c00" stroke-width="1"/>
<polyline points="308.0,456.0 311.0,453.2 320.0,452.9 323.0,456.5 362.2,456.5 364.6,453.7 367.0,454.5 595.5,454.5 599.2,452.6 603.0,455.0 605.0,457.0" fill="none" stroke="#9c9c9c" stroke-width="1"/>
<polyline points="605.0,457.0 607.3,458.5 619.0,458.5" fill="none" stroke="#ff8c00" stroke-width="1"/>
<rect x="75" y="485" width="230" height="3" fill="#ff00ff"/>
<polyline points="304.6,486.0 307.0,484.4 311.0,484.4 316.6,476.5 318.2,476.5" fill="none" stroke="#ff00ff" stroke-width="1"/>
<polyline points="318.2,476.5 365.4,476.5" fill="none" stroke="#50af00" stroke-width="1"/>
<polyline points="365.4,477.5 595.5,477.5 600.7,480.5 604.3,484.9" fill="none" stroke="#ff00ff" stroke-width="1"/>
<rect x="605" y="485" width="14" height="3" fill="#ff00ff"/>
<polyline points="75.0,503.5 306.2,503.5 308.0,505.5 312.0,501.0 314.2,498.8 321.0,498.8 323.0,497.5 362.2,497.5 364.6,498.5 367.0,497.5 594.8,496.5 599.0,499.0 602.9,504.7 605.0,503.5 619.0,503.5" fill="none" stroke="#ff0000" stroke-width="1"/>
<polyline points="307.0,502.0 310.0,504.0" fill="none" stroke="#ff0000" stroke-width="3"/>
<polyline points="600.0,502.0 603.0,504.0" fill="none" stroke="#ff0000" stroke-width="3"/>
<polyline points="75.0,512.5 306.2,512.5 309.0,514.0" fill="none" stroke="#9c9c9c" stroke-width="1"/>
<polyline points="309.0,514.0 313.4,517.2 321.4,516.5 323.0,515.5 362.2,515.5 363.5,516.5 596.3,516.5 598.5,517.9 601.0,516.0 604.0,513.5" fill="none" stroke="#ff8c00" stroke-width="1"/>
<polyline points="604.0,513.5 608.0,511.7 619.0,511.7" fill="none" stroke="#9c9c9c" stroke-width="1"/>
<polyline points="75.0,532.5 307.8,532.5" fill="none" stroke="#50af00" stroke-width="1"/>
<polyline points="307.8,532.5 311.0,535.0 314.0,538.0 316.6,538.8 322.2,540.5 362.2,540.5 363.0,539.5 386.2,539.5 387.0,540.5 593.3,540.5 596.3,539.6 600.0,537.0 603.0,534.0" fill="none" stroke="#ff00ff" stroke-width="1"/>
<polyline points="603.0,534.0 604.3,532.5 619.0,532.5" fill="none" stroke="#50af00" stroke-width="1"/>
<rect x="75" y="367" width="2" height="1" fill="#ff00ff"/>
<text x="75.0" y="565.4" font-size="11.5" fill="#fff" font-weight="bold" text-anchor="middle" textLength="32" lengthAdjust="spacingAndGlyphs">00:00</text>
<text x="211.0" y="565.4" font-size="11.5" fill="#fff" font-weight="bold" text-anchor="middle" textLength="32" lengthAdjust="spacingAndGlyphs">06:00</text>
<text x="347.0" y="565.4" font-size="11.5" fill="#fff" font-weight="bold" text-anchor="middle" textLength="32" lengthAdjust="spacingAndGlyphs">12:00</text>
<text x="483.0" y="565.4" font-size="11.5" fill="#fff" font-weight="bold" text-anchor="middle" textLength="32" lengthAdjust="spacingAndGlyphs">18:00</text>
<text x="8" y="573.8" font-size="12.3" fill="#fff" font-weight="bold" textLength="25.2" lengthAdjust="spacingAndGlyphs">UTC</text>
<text x="75.0" y="597" font-size="12.2" fill="#fff" font-weight="bold" text-anchor="middle" textLength="30.6" lengthAdjust="spacingAndGlyphs">26.47</text>
<text x="211.0" y="597" font-size="12.2" fill="#fff" font-weight="bold" text-anchor="middle" textLength="30.6" lengthAdjust="spacingAndGlyphs">27.81</text>
<text x="347.0" y="597" font-size="12.2" fill="#fff" font-weight="bold" text-anchor="middle" textLength="30.6" lengthAdjust="spacingAndGlyphs">29.08</text>
<text x="483.0" y="597" font-size="12.2" fill="#fff" font-weight="bold" text-anchor="middle" textLength="30.6" lengthAdjust="spacingAndGlyphs">30.27</text>
<text x="75.0" y="612.5" font-size="12.2" fill="#fff" font-weight="bold" text-anchor="middle" textLength="28.7" lengthAdjust="spacingAndGlyphs">-0.62</text>
<text x="211.0" y="612.5" font-size="12.2" fill="#fff" font-weight="bold" text-anchor="middle" textLength="28.7" lengthAdjust="spacingAndGlyphs">-0.76</text>
<text x="347.0" y="612.5" font-size="12.2" fill="#fff" font-weight="bold" text-anchor="middle" textLength="28.7" lengthAdjust="spacingAndGlyphs">-0.88</text>
<text x="483.0" y="612.5" font-size="12.2" fill="#fff" font-weight="bold" text-anchor="middle" textLength="28.7" lengthAdjust="spacingAndGlyphs">-0.99</text>
<text x="75.0" y="628" font-size="12.2" fill="#fff" font-weight="bold" text-anchor="middle" textLength="27.6" lengthAdjust="spacingAndGlyphs">1641</text>
<text x="211.0" y="628" font-size="12.2" fill="#fff" font-weight="bold" text-anchor="middle" textLength="27.6" lengthAdjust="spacingAndGlyphs">1648</text>
<text x="347.0" y="628" font-size="12.2" fill="#fff" font-weight="bold" text-anchor="middle" textLength="27.6" lengthAdjust="spacingAndGlyphs">1654</text>
<text x="483.0" y="628" font-size="12.2" fill="#fff" font-weight="bold" text-anchor="middle" textLength="27.6" lengthAdjust="spacingAndGlyphs">1700</text>
<text x="75.0" y="643.5" font-size="12.2" fill="#fff" font-weight="bold" text-anchor="middle" textLength="30.6" lengthAdjust="spacingAndGlyphs">26.47</text>
<text x="211.0" y="643.5" font-size="12.2" fill="#fff" font-weight="bold" text-anchor="middle" textLength="30.6" lengthAdjust="spacingAndGlyphs">27.82</text>
<text x="347.0" y="643.5" font-size="12.2" fill="#fff" font-weight="bold" text-anchor="middle" textLength="30.6" lengthAdjust="spacingAndGlyphs">29.09</text>
<text x="483.0" y="643.5" font-size="12.2" fill="#fff" font-weight="bold" text-anchor="middle" textLength="30.6" lengthAdjust="spacingAndGlyphs">30.28</text>
<text x="75.0" y="674.4" font-size="12.2" fill="#fff" font-weight="bold" text-anchor="middle" textLength="37.5" lengthAdjust="spacingAndGlyphs">191.25</text>
<text x="211.0" y="674.4" font-size="12.2" fill="#fff" font-weight="bold" text-anchor="middle" textLength="37.5" lengthAdjust="spacingAndGlyphs">350.86</text>
<text x="347.0" y="674.4" font-size="12.2" fill="#fff" font-weight="bold" text-anchor="middle" textLength="37.5" lengthAdjust="spacingAndGlyphs">150.32</text>
<text x="483.0" y="674.4" font-size="12.2" fill="#fff" font-weight="bold" text-anchor="middle" textLength="37.5" lengthAdjust="spacingAndGlyphs">309.64</text>
<text x="8.4" y="604.7" font-size="12.2" fill="#fff" font-weight="bold">R</text>
<text x="17.3" y="614" font-size="12" fill="#fff" font-weight="bold" textLength="27" lengthAdjust="spacingAndGlyphs">satur</text>
<text x="8" y="620.7" font-size="12.2" fill="#fff" font-weight="bold" textLength="17.4" lengthAdjust="spacingAndGlyphs">Lat</text>
<text x="8" y="635.7" font-size="12.2" fill="#fff" font-weight="bold" textLength="14" lengthAdjust="spacingAndGlyphs">LT</text>
<text x="8.4" y="651.6" font-size="12.2" fill="#fff" font-weight="bold">L</text>
<text x="15" y="660.5" font-size="12" fill="#fff" font-weight="bold" textLength="34.8" lengthAdjust="spacingAndGlyphs">satum</text>
<text x="375.6" y="688" font-size="10.8" fill="#fff" font-weight="bold" text-anchor="middle" textLength="113.2" lengthAdjust="spacingAndGlyphs">Background Subtracted</text>
<text x="569.2" y="688.1" font-size="10.8" fill="#fff" font-weight="bold" textLength="66.2" lengthAdjust="spacingAndGlyphs">in Stare Mode</text>
</svg></body></html>
